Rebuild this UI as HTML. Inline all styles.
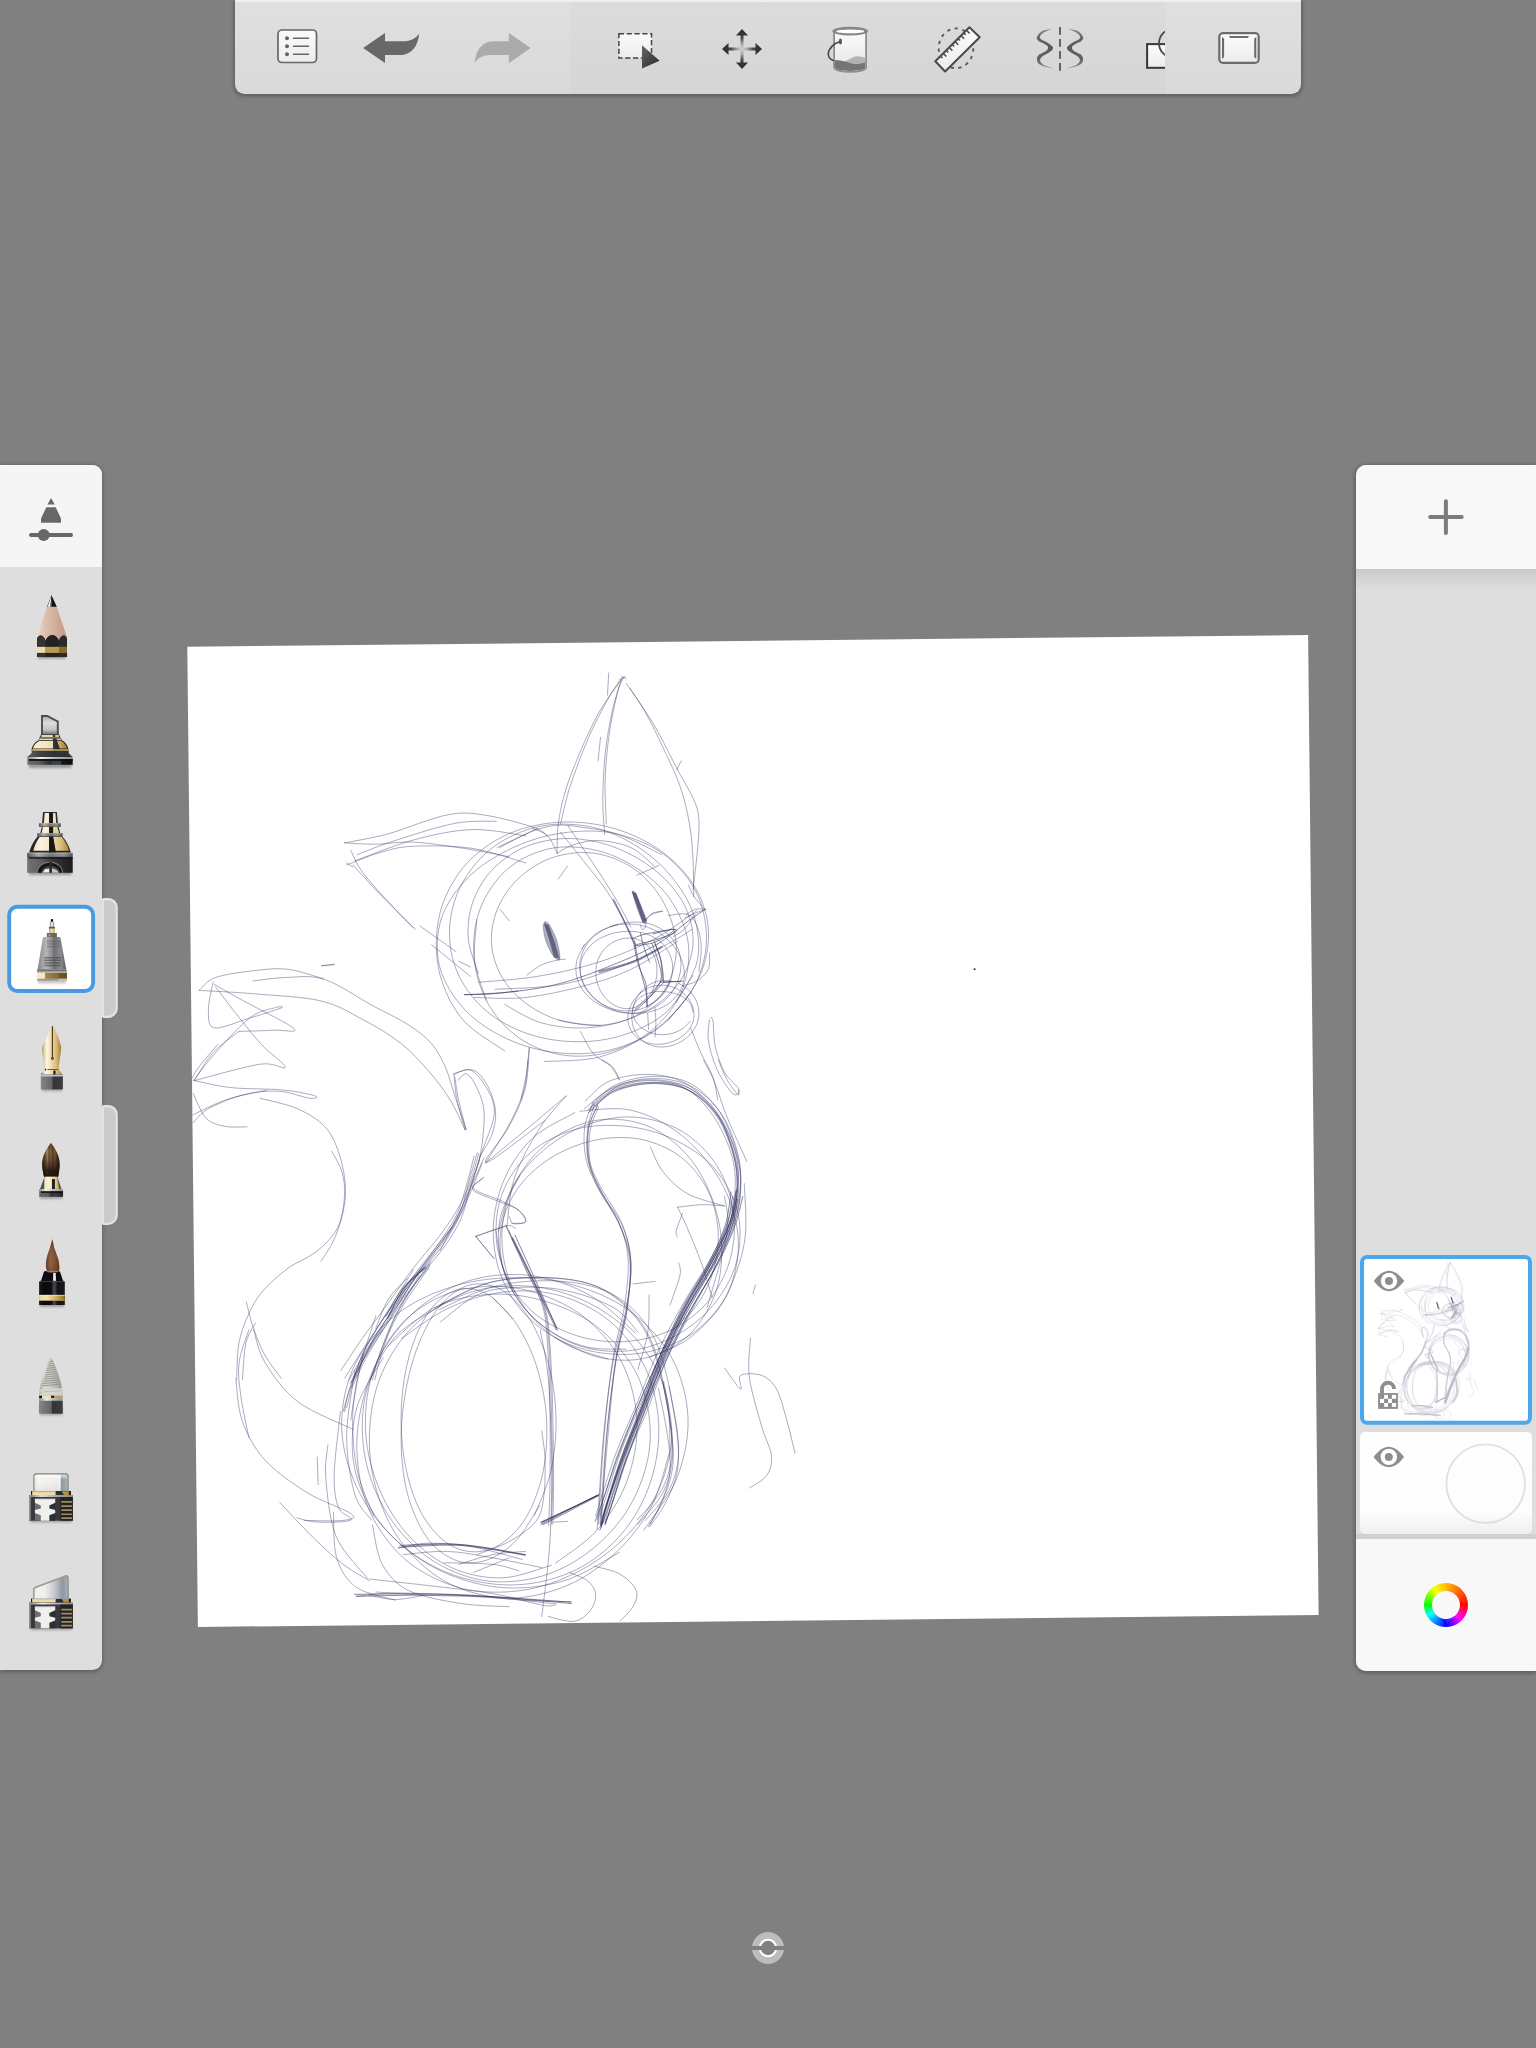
<!DOCTYPE html>
<html><head><meta charset="utf-8">
<style>
html,body{margin:0;padding:0;background:#808080;font-family:"Liberation Sans",sans-serif;}
body{width:1536px;height:2048px;overflow:hidden;position:relative;}
svg{position:absolute;left:0;top:0;display:block;}
.skl{stroke-width:var(--lw,.62px)}.skd{stroke-width:var(--dw,.8px)}
</style></head><body>
<svg width="1536" height="2048" viewBox="0 0 1536 2048">
<defs>
<linearGradient id="tbg" x1="0" y1="0" x2="0" y2="1"><stop offset="0" stop-color="#e0e0e0"/><stop offset="1" stop-color="#d9d9d9"/></linearGradient>
<linearGradient id="tbm" x1="0" y1="0" x2="0" y2="1"><stop offset="0" stop-color="#dcdcdc"/><stop offset="1" stop-color="#d5d5d5"/></linearGradient>
<filter id="sh2" x="-10%" y="-10%" width="120%" height="120%"><feGaussianBlur stdDeviation="2.200"/></filter><filter id="sh" x="-10%" y="-10%" width="120%" height="120%"><feGaussianBlur stdDeviation="1.5"/></filter>
</defs>
<rect width="1536" height="2048" fill="#808080"/>
<!--CANVAS-->
<polygon points="187.3,646.8 1308.1,635 1318.6,1614.9 197.9,1627" fill="#ffffff"/>
<!--SKETCH-->
<clipPath id="ccan"><polygon points="187.3,646.8 1308.1,635 1318.6,1614.9 197.9,1627"/></clipPath>
<g clip-path="url(#ccan)">
<g id="sk" fill="none" stroke-linecap="round" stroke-linejoin="round">
<path class="skl" stroke="#38386a" stroke-opacity=".68" d="M557.1 853.4C557.3 848.5 556.9 834.4 558.3 824.1C559.6 813.7 561.8 803.0 565.3 791.2C568.8 779.5 573.9 766.6 579.4 753.7C584.8 740.9 591.9 725.2 598.1 713.9C604.4 702.6 612.8 691.8 616.9 685.8C621.0 679.7 621.8 678.9 622.7 677.6M560.6 824.1C562.2 817.8 565.3 801.0 570.0 786.6C574.7 772.1 582.5 751.8 588.7 737.3C595.0 722.9 602.4 709.2 607.5 699.8C612.6 690.5 617.3 684.2 619.2 681.1M604.7 834.6C604.4 828.9 602.7 814.1 602.8 800.6C602.9 787.1 603.6 768.6 605.2 753.7C606.7 738.9 609.5 724.1 612.2 711.6C614.9 699.1 620.0 684.2 621.6 678.7M606.3 824.1C606.1 816.2 604.6 792.8 605.2 777.2C605.7 761.6 607.7 744.8 609.8 730.3C612.0 715.9 615.7 699.3 618.0 690.5C620.4 681.7 622.9 679.7 623.9 677.6M626.2 683.4C629.4 688.1 638.7 700.6 645.0 711.6C651.2 722.5 657.9 736.6 663.7 749.1C669.6 761.6 675.9 774.1 680.2 786.6C684.5 799.1 687.4 812.0 689.5 824.1C691.7 836.2 692.3 847.1 693.0 859.2C693.7 871.3 693.6 890.5 693.7 896.7M629.8 688.1C633.9 694.4 646.4 712.0 654.4 725.6C662.4 739.3 671.2 757.7 677.8 770.2C684.5 782.7 690.7 792.4 694.2 800.6C697.7 808.8 698.3 811.6 698.9 819.4C699.5 827.2 698.7 835.8 697.7 847.5C696.8 859.2 693.8 882.7 693.0 889.7M608.7 672.9L607.5 695.2M600.5 737.3L598.1 760.8M681.3 760.8L676.6 770.2M621.6 676.4L626.2 678.7M619.2 679.9L625.1 676.4M499.7 847.5C505.2 844.8 522.7 834.8 532.5 831.1C542.3 827.4 549.7 825.8 558.3 825.2C566.9 824.6 573.9 826.0 584.1 827.6C594.2 829.1 606.3 830.1 619.2 834.6C632.1 839.1 654.4 851.2 661.4 854.5M560.6 832.3C564.5 837.1 576.2 851.6 584.1 861.6C591.9 871.5 600.5 881.5 607.5 892.0C614.5 902.6 621.6 915.5 626.2 924.8C630.9 934.2 634.1 944.4 635.6 948.3M567.7 825.2C571.2 830.5 580.9 845.0 588.7 856.9C596.6 868.8 607.5 885.0 614.5 896.7C621.6 908.4 628.2 922.1 630.9 927.2M557.1 853.4C559.6 852.0 565.5 847.3 572.3 845.2C579.2 843.0 588.4 840.1 598.1 840.5C607.9 840.9 621.6 843.2 630.9 847.5C640.3 851.8 650.5 863.1 654.4 866.2M532.5 828.7C535.0 829.9 543.6 831.7 547.7 835.8C551.8 839.9 555.5 850.4 557.1 853.4M497.3 847.5L537.2 828.7M478.6 982.3C488.4 981.3 517.3 979.7 537.2 976.4C557.1 973.1 578.6 968.6 598.1 962.3C617.7 956.1 638.0 947.5 654.4 938.9C670.8 930.3 689.5 915.5 696.6 910.8M495.0 989.3C505.9 988.5 539.9 988.3 560.6 984.6C581.3 980.9 601.2 973.9 619.2 967.0C637.2 960.2 656.3 949.8 668.4 943.6C680.5 937.3 688.0 931.9 691.9 929.5M473.9 997.5C482.5 997.5 507.1 999.5 525.5 997.5C543.8 995.5 566.5 990.5 584.1 985.8C601.6 981.1 615.3 976.8 630.9 969.4C646.6 962.0 670.0 945.9 677.8 941.2M526.6 975.2C529.2 973.5 536.6 967.2 541.9 964.7C547.1 962.1 554.4 960.9 558.3 960.0C562.2 959.1 564.1 959.4 565.3 959.3M645.0 920.2C646.2 919.2 649.1 915.8 652.0 914.3C655.0 912.8 660.8 911.8 662.6 911.2M567.7 865.8L558.3 879.1M500.4 909.6L509.1 920.6M659.1 865.5L636.8 875.2M420.0 926.0L456.3 951.8M458.7 961.2L470.4 967.0M431.7 944.8L470.4 976.4M529.0 1047.9C528.6 1052.0 528.0 1063.8 526.6 1072.5C525.3 1081.2 521.8 1095.3 520.8 1099.9M580.5 1031.5C582.7 1035.2 588.6 1048.1 593.4 1053.7C598.3 1059.4 605.5 1061.2 609.8 1065.5C614.1 1069.8 617.7 1077.2 619.2 1079.5M690.7 1028.0C692.5 1032.3 697.5 1045.5 701.2 1053.7C705.0 1061.9 710.2 1069.5 713.0 1077.2C715.7 1084.9 716.9 1096.1 717.7 1099.9M709.5 1019.8C709.3 1023.1 707.3 1032.1 708.3 1039.7C709.3 1047.3 712.2 1057.7 715.3 1065.5C718.4 1073.3 723.7 1081.7 727.0 1086.6C730.3 1091.4 733.3 1094.4 735.2 1094.8C737.2 1095.2 740.5 1092.6 738.7 1088.9C737.0 1085.2 728.6 1079.5 724.7 1072.5C720.8 1065.5 717.3 1055.3 715.3 1046.7C713.4 1038.1 713.7 1025.7 713.0 1020.9C712.2 1016.2 711.0 1018.6 710.6 1018.1M688.4 885.0C689.3 887.0 691.5 892.6 694.2 896.7C697.0 900.8 703.0 907.5 704.8 909.6M684.8 917.8C686.6 917.0 692.1 914.5 695.4 913.1C698.7 911.8 703.2 910.2 704.8 909.6M668.4 915.5C671.6 915.3 682.5 912.7 687.2 914.3C691.9 915.9 694.2 919.6 696.6 924.8C698.9 930.1 700.9 938.1 701.2 945.9C701.6 953.7 699.3 967.4 698.9 971.7M709.5 953.0C709.3 955.7 710.4 964.7 708.3 969.4C706.1 974.1 700.9 978.4 696.6 981.1C692.3 983.8 684.8 985.0 682.5 985.8M504.7 1050.9C497.9 1046.0 474.6 1032.7 464.2 1021.2C453.7 1009.6 446.6 995.1 442.0 981.4C437.3 967.8 435.9 953.2 436.4 939.3C436.9 925.4 439.5 911.0 445.1 897.8C450.7 884.6 458.9 871.0 469.9 860.1C480.9 849.3 495.6 839.2 511.0 832.8C526.4 826.5 545.0 822.7 562.3 822.0C579.6 821.3 598.2 823.9 614.5 828.6C630.8 833.4 647.0 841.1 660.2 850.4C673.3 859.7 685.4 871.8 693.4 884.5C701.4 897.2 706.7 912.4 708.2 926.6C709.7 940.7 707.1 956.1 702.3 969.5C697.5 983.0 689.0 996.0 679.2 1007.3C669.5 1018.6 657.3 1029.1 643.7 1037.4C630.1 1045.8 614.2 1053.4 597.7 1057.4C581.1 1061.4 553.2 1060.8 544.4 1061.5M691.4 992.0C685.9 998.1 671.7 1018.7 658.4 1028.3C645.0 1038.0 627.8 1045.7 611.2 1049.7C594.5 1053.8 575.5 1054.6 558.3 1052.8C541.0 1051.1 523.2 1046.3 507.6 1039.1C492.1 1032.0 476.4 1022.0 465.1 1010.0C453.8 998.0 443.8 982.4 439.8 967.2C435.8 952.0 436.6 933.9 441.2 919.0C445.9 904.1 456.6 889.4 467.8 877.8C479.1 866.3 494.0 857.0 508.9 849.6C523.8 842.3 540.4 836.5 557.3 833.8C574.3 831.0 593.4 829.7 610.7 832.8C627.9 835.9 646.8 842.7 660.9 852.2C675.0 861.8 687.5 876.0 695.1 890.1C702.7 904.1 706.2 921.1 706.5 936.5C706.7 951.9 702.9 968.2 696.4 982.3C689.9 996.4 672.2 1014.6 667.4 1021.1M693.1 975.4C688.3 981.8 676.5 1003.8 664.3 1013.9C652.0 1024.1 635.2 1031.6 619.5 1036.2C603.8 1040.8 586.2 1042.3 570.0 1041.5C553.8 1040.8 537.0 1037.5 522.2 1031.7C507.5 1026.0 492.6 1017.3 481.6 1006.8C470.5 996.3 461.2 982.5 455.9 968.8C450.6 955.2 448.6 939.3 449.8 924.7C451.0 910.1 455.7 894.6 463.2 881.5C470.7 868.3 482.0 855.1 495.0 845.8C508.0 836.6 525.3 829.1 541.5 826.0C557.7 822.9 576.5 823.8 592.4 827.2C608.2 830.6 623.7 838.0 636.8 846.2C649.9 854.3 661.6 864.7 671.1 876.2C680.5 887.7 689.3 901.0 693.7 915.0C698.1 929.0 700.3 945.7 697.4 960.3C694.5 974.9 679.8 995.6 676.2 1002.6M478.1 972.9C476.5 967.3 469.3 950.5 468.3 939.0C467.4 927.5 468.6 915.1 472.2 903.9C475.9 892.7 482.1 881.0 490.4 871.8C498.7 862.5 510.1 853.9 522.0 848.3C533.9 842.8 548.4 839.6 561.6 838.7C574.9 837.8 588.9 839.9 601.4 843.0C613.9 846.2 625.7 851.5 636.5 857.6C647.2 863.8 657.3 871.2 665.7 879.8C674.0 888.5 682.0 898.7 686.5 909.6C691.1 920.5 693.9 933.4 692.9 945.2C692.0 956.9 687.5 969.7 680.9 980.1C674.3 990.4 663.9 999.9 653.3 1007.0C642.6 1014.2 629.7 1019.4 617.2 1022.9C604.6 1026.4 591.0 1028.2 578.0 1028.0C565.0 1027.9 551.3 1026.0 539.0 1022.1C526.8 1018.2 510.5 1007.5 504.8 1004.5M486.2 1000.1C484.2 992.7 474.8 970.6 473.8 955.3C472.8 940.1 474.7 922.9 480.3 908.5C485.9 894.1 495.8 879.1 507.4 869.1C519.0 859.1 535.3 851.7 550.0 848.6C564.7 845.4 581.3 847.0 595.7 850.2C610.1 853.4 624.1 859.8 636.4 867.9C648.7 875.9 661.1 886.2 669.7 898.6C678.3 911.0 686.0 927.0 688.1 942.2C690.1 957.5 687.8 975.9 682.1 990.3C676.4 1004.6 665.2 1018.5 653.8 1028.6C642.3 1038.7 627.5 1046.1 613.3 1050.7C599.1 1055.2 583.0 1057.2 568.3 1055.7C553.6 1054.3 537.7 1049.5 525.0 1041.8C512.3 1034.2 500.2 1022.4 491.9 1009.9C483.6 997.4 477.7 981.7 475.2 966.7C472.6 951.6 476.5 927.5 476.8 919.6M600.3 1025.4C593.9 1024.7 573.8 1024.4 561.7 1021.0C549.7 1017.6 537.9 1012.0 528.1 1004.9C518.3 997.9 508.9 988.7 502.8 978.6C496.7 968.6 492.5 956.2 491.6 944.6C490.7 933.0 492.9 920.1 497.4 909.1C501.9 898.1 509.4 887.1 518.4 878.6C527.3 870.1 539.1 862.4 551.1 858.1C563.1 853.8 577.7 851.7 590.5 852.8C603.3 853.9 616.9 858.7 627.6 864.8C638.4 870.8 647.7 880.1 655.0 889.3C662.2 898.6 667.8 909.3 671.3 920.3C674.8 931.3 677.1 943.6 676.0 955.2C674.8 966.9 671.1 980.1 664.3 990.3C657.5 1000.4 646.5 1010.2 635.1 1016.1C623.8 1022.0 609.3 1024.9 596.5 1025.6C583.7 1026.2 564.6 1020.8 558.3 1019.9M581.9 948.5C584.1 946.2 589.7 938.2 595.1 934.4C600.6 930.5 607.5 927.2 614.3 925.5C621.2 923.9 629.3 923.5 636.3 924.4C643.3 925.3 650.5 928.0 656.3 931.1C662.1 934.3 667.1 938.7 671.2 943.2C675.3 947.7 678.7 952.8 680.9 958.2C683.1 963.5 684.7 969.6 684.4 975.4C684.1 981.2 682.4 987.8 679.0 993.0C675.5 998.2 669.9 1003.3 663.9 1006.6C658.0 1009.9 650.2 1012.0 643.2 1013.0C636.2 1014.0 628.6 1013.5 621.8 1012.3C614.9 1011.2 608.1 1009.0 602.2 1006.1C596.3 1003.1 590.6 999.2 586.4 994.6C582.2 990.1 578.8 984.4 577.2 978.8C575.6 973.2 575.5 966.9 576.7 961.2C577.9 955.5 583.2 947.4 584.5 944.6M669.9 982.4C668.2 985.0 664.0 993.5 659.6 997.8C655.3 1002.0 649.5 1005.8 643.6 1008.0C637.7 1010.2 630.6 1011.3 624.3 1010.9C618.0 1010.6 611.2 1008.7 605.6 1005.9C599.9 1003.2 594.4 999.2 590.4 994.6C586.3 990.0 582.7 984.1 581.2 978.2C579.7 972.4 579.7 965.3 581.6 959.6C583.4 953.8 587.7 948.0 592.2 943.8C596.8 939.6 603.1 936.6 609.0 934.5C614.9 932.5 621.4 931.4 627.7 931.3C634.0 931.3 640.9 931.9 646.9 934.1C652.8 936.3 659.2 940.0 663.4 944.6C667.6 949.2 670.9 955.6 672.1 961.5C673.3 967.4 672.6 974.2 670.8 979.9C669.0 985.6 665.6 991.3 661.5 995.8C657.4 1000.3 648.7 1005.1 646.2 1007.0M644.9 1001.2C643.2 1002.2 638.6 1006.0 635.2 1007.3C631.8 1008.5 628.0 1008.9 624.4 1008.5C620.9 1008.2 617.2 1006.9 614.0 1005.0C610.8 1003.2 607.6 1000.6 605.0 997.5C602.4 994.4 600.0 990.6 598.5 986.6C596.9 982.5 595.8 977.6 595.8 973.1C595.7 968.6 596.6 963.6 598.1 959.5C599.6 955.4 602.1 951.6 604.8 948.6C607.4 945.6 610.7 943.4 614.0 941.7C617.2 940.0 620.7 938.9 624.1 938.4C627.6 937.9 631.3 937.8 634.8 938.6C638.3 939.5 642.1 941.0 645.1 943.5C648.2 945.9 651.1 949.5 653.1 953.3C655.0 957.1 656.3 961.9 656.8 966.4C657.3 970.8 656.9 975.7 656.0 980.0C655.2 984.3 652.3 990.2 651.6 992.2M678.9 983.4C680.6 984.6 686.4 987.7 689.3 990.7C692.3 993.6 694.8 997.3 696.4 1001.1C698.0 1004.8 698.9 1009.2 698.9 1013.2C698.9 1017.2 698.0 1021.5 696.4 1025.2C694.8 1028.9 692.2 1032.3 689.4 1035.2C686.6 1038.1 683.2 1040.6 679.6 1042.5C675.9 1044.3 671.8 1045.9 667.7 1046.5C663.6 1047.2 658.9 1047.3 654.7 1046.3C650.5 1045.4 646.1 1043.4 642.7 1040.8C639.4 1038.1 636.5 1034.3 634.7 1030.6C632.9 1026.9 632.1 1022.5 631.8 1018.5C631.6 1014.5 632.2 1010.4 633.3 1006.6C634.3 1002.8 635.9 999.0 638.1 995.7C640.3 992.3 643.1 989.0 646.4 986.6C649.7 984.2 653.9 982.1 658.0 981.1C662.1 980.2 668.8 980.9 671.0 980.8M639.9 993.2C641.7 992.1 646.7 988.2 650.7 986.9C654.8 985.5 659.6 984.9 663.9 985.2C668.3 985.5 672.9 986.9 676.7 988.7C680.5 990.6 684.1 993.4 686.7 996.4C689.4 999.4 691.6 1003.1 692.7 1006.8C693.9 1010.4 694.3 1014.6 693.8 1018.3C693.2 1022.0 691.6 1025.9 689.4 1029.1C687.2 1032.3 684.0 1035.2 680.7 1037.4C677.4 1039.7 673.4 1041.5 669.4 1042.6C665.3 1043.8 660.8 1044.5 656.5 1044.3C652.2 1044.1 647.3 1043.2 643.4 1041.5C639.5 1039.7 635.7 1036.8 633.1 1033.6C630.6 1030.5 628.9 1026.3 628.2 1022.5C627.5 1018.8 627.9 1014.7 628.8 1011.1C629.7 1007.4 631.3 1003.9 633.4 1000.7C635.5 997.5 640.0 993.5 641.3 992.0M690.0 1021.4C689.0 1022.5 686.1 1026.1 683.6 1028.0C681.1 1029.8 678.1 1031.4 675.0 1032.5C671.8 1033.6 668.3 1034.4 664.8 1034.6C661.4 1034.8 657.7 1034.6 654.4 1033.8C651.1 1033.1 647.8 1031.8 645.0 1030.2C642.2 1028.6 639.8 1026.5 637.9 1024.3C635.9 1022.1 634.4 1019.5 633.6 1016.9C632.7 1014.3 632.4 1011.3 632.9 1008.6C633.4 1006.0 634.7 1003.1 636.6 1000.8C638.5 998.5 641.4 996.3 644.3 994.9C647.3 993.4 650.9 992.4 654.3 991.9C657.7 991.3 661.2 991.3 664.6 991.6C668.0 991.8 671.4 992.4 674.5 993.3C677.7 994.3 681.0 995.6 683.6 997.3C686.3 999.0 688.8 1001.3 690.4 1003.8C692.0 1006.2 692.6 1010.6 693.0 1011.9M611.0 926.4C614.0 925.7 623.0 922.6 629.3 922.2C635.5 921.7 642.3 921.9 648.5 923.6C654.6 925.3 661.2 928.3 666.1 932.4C671.0 936.5 675.4 942.3 677.8 948.1C680.3 953.9 681.2 960.9 680.9 967.1C680.6 973.3 678.6 979.8 675.9 985.3C673.2 990.9 669.3 996.3 664.6 1000.4C660.0 1004.6 654.2 1008.2 648.2 1010.4C642.3 1012.5 635.4 1013.4 629.1 1013.1C622.7 1012.9 616.1 1011.2 610.3 1008.7C604.5 1006.2 598.8 1002.5 594.3 998.1C589.8 993.8 585.5 988.2 583.1 982.4C580.7 976.6 579.3 969.6 579.8 963.3C580.4 957.1 582.9 950.3 586.3 945.0C589.7 939.8 595.0 935.2 600.3 931.7C605.5 928.2 614.7 925.5 617.6 924.2M598.5 971.7C604.6 969.8 624.3 965.0 634.9 960.7C645.6 956.5 657.7 948.6 662.3 946.1M599.3 970.7C605.3 969.0 624.8 964.5 635.3 960.5C645.8 956.6 657.8 949.1 662.3 946.8M599.0 972.9C604.9 971.0 624.1 965.8 634.5 961.5C644.8 957.3 656.6 949.5 661.0 947.1M599.2 972.2C605.2 970.5 624.6 966.0 635.1 961.9C645.7 957.8 657.8 950.0 662.3 947.7M613.1 900.2C615.2 904.5 622.2 918.1 625.8 925.7C629.5 933.3 633.4 942.4 634.9 945.8M613.3 898.8C615.5 903.1 622.5 916.9 626.3 924.5C630.1 932.1 634.5 941.2 636.1 944.6M614.2 900.2C616.1 904.2 622.3 917.4 625.6 924.6C628.9 931.7 632.6 940.1 634.0 943.2M640.4 924.8C640.7 925.6 641.5 928.9 642.2 929.4C643.0 929.8 644.2 929.4 645.0 927.5C645.7 925.7 646.5 920.0 646.8 918.4M646.8 918.4C647.9 917.5 650.6 914.2 653.2 913.0C655.8 911.7 660.8 911.4 662.3 911.1M655.0 1007.8C655.1 1010.5 655.9 1019.3 655.9 1024.2C655.9 1029.0 655.1 1034.8 655.0 1036.9M647.7 1013.2L648.6 1029.6M686.0 914.8C687.5 913.9 691.8 910.2 695.1 909.3C698.4 908.4 704.2 909.3 706.0 909.3M673.2 936.7C675.0 935.4 680.5 933.0 684.2 929.4C687.8 925.7 693.3 917.2 695.1 914.8M344.6 842.9C351.9 841.4 371.3 838.4 388.3 833.8C405.3 829.1 430.7 818.1 446.7 815.0C462.6 811.9 469.6 812.9 484.2 815.0C498.8 817.1 523.8 824.0 534.2 827.5C544.6 831.0 544.6 834.4 546.7 835.8M355.0 860.8C364.7 857.4 393.9 845.2 413.3 840.0C432.8 834.8 452.9 830.3 471.7 829.6C490.4 828.9 516.8 834.8 525.8 835.8M346.7 865.0C352.2 862.9 368.9 855.6 380.0 852.5C391.1 849.4 398.1 846.9 413.3 846.2C428.6 845.6 452.9 845.6 471.7 848.3C490.4 851.1 516.8 860.5 525.8 862.9M357.1 854.6C363.7 852.2 380.3 845.2 396.7 840.0C413.0 834.8 438.3 826.5 455.0 823.3C471.7 820.2 489.7 821.6 496.7 821.2M352.9 865.0C357.4 869.9 369.6 883.4 380.0 894.2C390.4 904.9 409.5 923.7 415.4 929.6M350.8 850.4C352.9 854.2 355.7 863.3 363.3 873.3C371.0 883.4 388.3 901.8 396.7 910.8C405.0 919.9 410.6 924.7 413.3 927.5M346.7 862.9L352.9 867.1M344.6 842.9C349.8 843.1 364.4 844.3 375.8 844.2C387.3 844.0 398.8 841.4 413.3 842.1C427.9 842.8 447.4 845.9 463.3 848.3C479.3 850.8 501.5 855.3 509.2 856.7M321.7 965.8L334.2 964.2M199.1 990.4C201.8 988.2 206.1 980.8 215.5 977.5C224.8 974.2 243.2 971.8 255.3 970.5C267.4 969.1 276.8 967.9 288.1 969.3C299.5 970.7 317.4 977.1 323.3 978.7M253.0 981.0C258.4 980.4 273.9 977.8 285.8 977.5C297.7 977.2 310.0 974.7 324.5 979.4C338.9 984.1 358.6 998.1 372.5 1005.6C386.4 1013.1 397.9 1018.1 407.7 1024.4C417.4 1030.6 424.8 1036.1 431.1 1043.1C437.3 1050.2 441.2 1058.0 445.2 1066.6C449.1 1075.2 451.0 1084.1 454.5 1094.7C458.0 1105.2 464.3 1124.0 466.2 1129.8M199.1 990.4C208.4 991.0 235.0 992.1 255.3 993.9C275.6 995.7 303.0 996.6 320.9 1000.9C338.9 1005.2 349.8 1012.7 363.1 1019.7C376.4 1026.7 389.7 1034.5 400.6 1043.1C411.6 1051.7 420.5 1061.9 428.7 1071.2C437.0 1080.6 443.8 1089.6 449.8 1099.4C455.9 1109.1 462.5 1124.8 465.1 1129.8M213.1 982.2C212.3 986.9 208.2 1002.7 208.4 1010.3C208.6 1017.9 207.7 1026.5 214.3 1027.9C220.9 1029.3 237.1 1021.8 248.3 1018.5C259.4 1015.2 276.8 1009.7 281.1 1008.0C285.4 1006.2 279.1 1006.4 274.1 1008.0C269.0 1009.5 260.0 1010.3 250.6 1017.3C241.2 1024.4 227.4 1039.6 217.8 1050.2C208.2 1060.7 197.3 1075.5 193.2 1080.6M214.3 984.5C219.2 987.3 230.3 993.6 243.6 1000.9C256.9 1008.3 288.9 1023.7 294.0 1028.6C299.1 1033.5 283.2 1029.8 274.1 1030.2C264.9 1030.7 244.8 1031.2 238.9 1031.4M215.5 986.9C219.4 992.0 231.1 1007.6 238.9 1017.3C246.7 1027.1 254.6 1037.1 262.3 1045.5C270.1 1053.8 285.7 1064.1 285.3 1067.3C284.9 1070.4 275.2 1062.0 260.0 1064.2C244.8 1066.4 205.3 1077.9 194.4 1080.6M194.4 1080.6C200.6 1081.8 217.0 1086.1 231.9 1087.7C246.7 1089.2 269.6 1088.6 283.4 1090.0C297.3 1091.4 310.8 1094.5 315.1 1095.9C319.4 1097.2 315.3 1099.0 309.2 1098.2C303.2 1097.4 289.7 1091.8 278.7 1091.2C267.8 1090.6 255.3 1091.8 243.6 1094.7C231.9 1097.6 216.8 1104.1 208.4 1108.7C200.0 1113.4 195.7 1120.5 193.2 1122.8M193.2 1093.5C195.4 1097.6 200.8 1112.7 206.1 1118.1C211.4 1123.6 218.0 1124.9 224.8 1126.3C231.7 1127.8 243.4 1126.7 247.1 1126.8M193.2 1114.6C198.9 1112.1 214.9 1103.5 227.2 1099.4C239.5 1095.3 260.4 1091.6 267.0 1090.0M260.0 1098.2C266.2 1100.0 286.6 1103.9 297.5 1108.7C308.4 1113.6 318.6 1119.7 325.6 1127.5C332.7 1135.3 336.4 1145.5 339.7 1155.6C343.0 1165.8 345.2 1178.3 345.5 1188.4C345.9 1198.6 344.2 1207.6 342.0 1216.6C339.9 1225.5 336.2 1234.9 332.7 1242.3C329.1 1249.8 322.9 1258.0 320.9 1261.1M331.5 1150.9C333.2 1154.5 339.9 1164.2 342.0 1172.0C344.2 1179.8 345.2 1188.4 344.4 1197.8C343.6 1207.2 342.0 1219.3 337.3 1228.3C332.7 1237.3 324.5 1245.1 316.2 1251.7C308.0 1258.4 297.1 1261.5 288.1 1268.1C279.1 1274.8 269.0 1283.7 262.3 1291.6C255.7 1299.4 252.2 1306.4 248.3 1315.0C244.4 1323.6 240.9 1332.3 238.9 1343.1C237.0 1353.9 237.0 1373.8 236.6 1379.9M246.4 1302.1C247.5 1306.2 249.9 1317.9 253.0 1326.7C256.0 1335.5 260.0 1346.2 264.7 1354.8C269.4 1363.4 278.4 1374.4 281.1 1378.3M255.3 1323.2C253.7 1326.5 248.1 1333.7 245.9 1343.1C243.8 1352.6 243.0 1373.8 242.4 1379.9M321.6 965.8L334.3 964.6M453.4 1073.6C456.7 1073.0 467.6 1068.1 473.3 1070.1C478.9 1072.0 483.6 1078.5 487.3 1085.3C491.1 1092.1 494.8 1102.9 495.5 1111.1C496.3 1119.3 494.6 1127.1 492.0 1134.5C489.5 1142.0 482.3 1152.1 480.3 1155.6M454.1 1074.8C454.5 1078.9 455.0 1090.2 456.9 1099.4C458.7 1108.6 463.7 1124.8 465.1 1129.8M458.0 1080.6C459.4 1079.5 463.3 1072.8 466.2 1073.6C469.2 1074.4 472.7 1079.5 475.6 1085.3C478.6 1091.2 482.7 1099.8 483.8 1108.7C485.0 1117.7 483.4 1130.6 482.7 1139.2C481.9 1147.8 479.7 1156.8 479.1 1160.3M529.5 1047.8C528.7 1054.8 528.4 1076.7 524.8 1090.0C521.3 1103.3 514.9 1115.4 508.4 1127.5C502.0 1139.6 480.1 1163.8 486.2 1162.7C492.3 1161.5 535.2 1127.5 545.0 1120.5M483.8 1177.2C482.1 1178.7 475.1 1183.6 473.7 1186.1C472.4 1188.6 471.0 1189.2 475.6 1192.0C480.2 1194.7 494.4 1199.6 501.4 1202.5C508.4 1205.4 513.7 1206.4 517.8 1209.5C521.9 1212.7 526.8 1218.9 526.0 1221.2C525.2 1223.6 515.9 1224.4 513.1 1223.6C510.4 1222.8 510.2 1217.7 509.6 1216.6M475.6 1236.5C480.7 1234.7 499.5 1227.3 506.1 1225.9C512.7 1224.6 513.9 1227.9 515.5 1228.3M475.6 1236.5L494.4 1258.7M217.8 1044.3C214.7 1048.0 203.4 1060.9 199.1 1066.6C194.8 1072.2 193.2 1076.3 192.0 1078.3M238.9 1031.4C234.6 1034.9 220.5 1044.3 213.1 1052.5C205.7 1060.7 197.5 1075.9 194.4 1080.6M480.3 1155.6C478.7 1160.7 474.3 1176.3 470.9 1186.1C467.6 1195.9 465.1 1204.8 460.4 1214.2C455.7 1223.6 449.6 1232.6 442.8 1242.3C436.0 1252.1 427.2 1262.3 419.4 1272.8C411.6 1283.4 404.5 1293.1 395.9 1305.6C387.3 1318.1 375.6 1335.4 367.8 1347.8C360.0 1360.2 352.2 1374.6 349.1 1379.9M477.2 1152.7C475.7 1157.9 471.2 1173.6 468.2 1183.9C465.3 1194.2 463.9 1204.6 459.5 1214.3C455.0 1223.9 448.3 1232.3 441.5 1242.0C434.7 1251.8 426.1 1262.0 418.6 1272.9C411.1 1283.7 404.8 1294.4 396.5 1307.1C388.2 1319.8 376.5 1336.5 369.0 1349.0C361.5 1361.6 354.4 1376.8 351.4 1382.3M479.5 1160.3C477.8 1165.5 472.6 1181.6 469.4 1191.5C466.2 1201.5 464.7 1210.7 460.5 1220.0C456.3 1229.3 450.7 1237.7 444.0 1247.2C437.3 1256.6 428.1 1266.2 420.4 1276.5C412.7 1286.7 406.3 1296.2 397.7 1308.6C389.1 1321.0 376.8 1338.4 368.8 1350.9C360.9 1363.3 353.3 1377.9 350.2 1383.3M478.8 1153.3C477.3 1158.3 473.3 1174.1 469.6 1183.6C466.0 1193.1 462.2 1201.2 457.0 1210.2C451.8 1219.2 445.6 1227.7 438.4 1237.4C431.1 1247.0 421.3 1257.6 413.4 1268.0C405.5 1278.3 399.5 1287.5 390.9 1299.4C382.2 1311.4 369.9 1327.7 361.5 1339.5C353.2 1351.4 344.3 1365.5 340.8 1370.7M482.2 1163.1C480.2 1168.0 474.6 1183.1 470.5 1192.5C466.5 1201.8 463.0 1210.2 458.1 1219.3C453.3 1228.4 448.3 1237.7 441.5 1247.1C434.7 1256.4 425.6 1265.4 417.4 1275.3C409.2 1285.1 401.3 1294.0 392.4 1306.1C383.5 1318.1 372.0 1335.5 364.0 1347.6C356.1 1359.6 348.0 1373.1 344.8 1378.2M474.0 1156.2C472.7 1161.3 469.0 1176.7 466.1 1186.5C463.2 1196.4 460.9 1205.9 456.4 1215.4C451.8 1224.9 445.3 1233.6 438.7 1243.5C432.0 1253.4 423.6 1263.8 416.4 1275.0C409.1 1286.1 403.2 1297.2 395.1 1310.4C387.1 1323.7 375.3 1341.5 368.1 1354.3C360.9 1367.2 354.6 1382.2 351.9 1387.8M588.4 1109.5C592.6 1106.2 602.9 1094.2 613.2 1089.7C623.5 1085.2 637.9 1082.3 650.3 1082.3C662.7 1082.3 676.3 1083.9 687.4 1089.7C698.5 1095.5 709.3 1105.4 717.1 1116.9C724.9 1128.4 731.1 1145.8 734.4 1159.0C737.7 1172.2 737.7 1184.5 736.9 1196.1C736.1 1207.6 733.6 1216.7 729.5 1228.2C725.3 1239.8 719.2 1252.1 712.1 1265.3C705.1 1278.5 695.6 1292.1 687.4 1307.4C679.2 1322.7 670.1 1340.4 662.7 1356.9C655.2 1373.4 649.5 1389.9 642.9 1406.4C636.3 1422.9 628.9 1440.2 623.1 1455.8C617.3 1471.5 611.9 1489.0 608.2 1500.4C604.5 1511.8 602.0 1520.2 600.8 1524.1M588.9 1109.8C593.2 1106.6 604.3 1094.9 614.7 1090.4C625.0 1085.8 638.8 1082.8 651.0 1082.4C663.3 1082.0 677.3 1082.3 688.4 1087.9C699.5 1093.5 709.9 1104.4 717.7 1116.0C725.4 1127.7 731.8 1145.1 734.9 1157.9C738.0 1170.8 737.4 1182.2 736.4 1193.3C735.4 1204.4 733.2 1213.2 729.1 1224.8C725.0 1236.4 718.9 1249.8 711.7 1263.0C704.4 1276.2 694.0 1288.8 685.6 1303.9C677.3 1319.0 669.1 1337.2 661.5 1353.5C653.8 1369.7 646.9 1384.9 639.8 1401.2C632.7 1417.6 624.7 1436.1 618.8 1451.6C613.0 1467.2 608.4 1483.2 604.9 1494.5C601.4 1505.8 599.0 1515.2 597.8 1519.3M588.3 1112.7C592.6 1109.2 603.4 1096.7 614.2 1091.9C624.9 1087.0 639.9 1083.6 652.6 1083.4C665.2 1083.3 679.2 1085.6 690.2 1091.1C701.2 1096.6 711.0 1105.6 718.5 1116.7C726.0 1127.8 732.0 1144.8 735.3 1157.7C738.7 1170.6 739.1 1182.8 738.4 1194.1C737.6 1205.3 734.8 1213.9 730.8 1225.3C726.9 1236.6 721.6 1249.0 714.8 1262.2C707.9 1275.4 697.7 1289.3 689.5 1304.5C681.3 1319.7 672.9 1337.1 665.7 1353.5C658.5 1369.8 653.0 1386.2 646.4 1402.6C639.8 1419.0 632.1 1436.2 625.9 1451.8C619.8 1467.3 613.5 1484.6 609.5 1495.6C605.4 1506.6 603.0 1514.0 601.7 1517.7M591.9 1103.5C596.0 1100.3 606.2 1088.9 616.6 1084.4C627.0 1079.9 641.9 1076.4 654.3 1076.3C666.8 1076.2 680.2 1077.9 691.2 1083.9C702.1 1090.0 712.3 1100.9 720.0 1112.7C727.7 1124.6 734.0 1141.7 737.4 1155.2C740.9 1168.7 741.4 1181.8 740.6 1193.6C739.8 1205.3 736.9 1214.2 732.7 1225.7C728.5 1237.3 722.2 1249.6 715.3 1262.8C708.3 1275.9 699.1 1289.5 690.9 1304.8C682.7 1320.1 673.3 1337.8 666.0 1354.5C658.7 1371.1 653.5 1387.9 647.1 1404.8C640.7 1421.6 633.5 1439.6 627.6 1455.4C621.6 1471.2 615.1 1488.3 611.3 1499.7C607.5 1511.2 605.9 1520.1 604.9 1524.2M584.6 1108.6C588.9 1105.4 599.5 1094.2 610.0 1089.5C620.6 1084.8 635.5 1080.8 648.0 1080.5C660.5 1080.3 674.2 1082.3 685.1 1088.2C696.0 1094.0 705.4 1104.5 713.2 1115.8C721.0 1127.1 728.3 1143.3 731.9 1156.0C735.5 1168.8 735.8 1180.8 734.9 1192.4C734.0 1204.0 730.8 1214.1 726.5 1225.4C722.3 1236.8 716.7 1247.7 709.6 1260.6C702.5 1273.4 692.5 1287.3 684.0 1302.2C675.5 1317.2 666.1 1334.1 658.5 1350.4C650.9 1366.8 645.1 1383.8 638.3 1400.3C631.4 1416.8 623.3 1434.0 617.5 1449.3C611.6 1464.5 606.8 1480.7 603.1 1491.9C599.5 1503.0 596.9 1511.9 595.7 1515.9M585.1 1101.2C589.2 1097.9 598.9 1085.6 609.3 1081.2C619.8 1076.7 635.3 1074.1 647.8 1074.4C660.3 1074.7 672.9 1076.5 684.3 1082.7C695.6 1088.9 707.9 1099.9 716.0 1111.6C724.1 1123.3 729.4 1139.8 733.0 1153.0C736.5 1166.2 737.7 1179.4 737.3 1191.0C736.9 1202.6 734.7 1210.9 730.6 1222.6C726.4 1234.3 719.3 1247.9 712.3 1261.2C705.3 1274.5 696.1 1287.2 688.3 1302.6C680.6 1318.0 672.6 1336.8 665.7 1353.4C658.7 1370.0 653.1 1385.9 646.9 1402.3C640.6 1418.7 633.5 1435.8 628.0 1451.7C622.6 1467.5 617.7 1485.6 614.0 1497.3C610.4 1509.1 607.4 1518.0 606.0 1522.1M595.7 1105.8C599.7 1102.4 609.4 1090.0 619.4 1085.4C629.4 1080.9 643.6 1078.1 655.8 1078.4C668.0 1078.7 681.6 1081.2 692.6 1087.2C703.6 1093.2 714.2 1102.9 721.9 1114.4C729.5 1125.9 735.4 1143.1 738.4 1156.1C741.4 1169.2 741.0 1181.2 739.8 1192.8C738.7 1204.5 735.8 1214.5 731.6 1226.0C727.5 1237.6 721.9 1249.0 715.0 1262.3C708.1 1275.6 698.7 1290.3 690.2 1305.9C681.7 1321.4 671.9 1339.3 664.2 1355.8C656.6 1372.3 650.9 1388.4 644.4 1404.7C637.9 1421.0 631.1 1438.0 625.4 1453.7C619.6 1469.3 613.5 1487.3 609.8 1498.7C606.1 1510.1 604.1 1518.0 603.0 1521.9M590.1 1111.4C594.2 1108.0 603.9 1095.6 614.3 1090.9C624.8 1086.3 640.3 1083.6 652.8 1083.6C665.3 1083.5 678.0 1084.6 689.2 1090.5C700.5 1096.5 712.2 1107.8 720.4 1119.5C728.5 1131.2 734.9 1147.8 738.1 1160.8C741.3 1173.8 740.7 1186.1 739.8 1197.5C738.9 1208.9 736.6 1217.6 732.6 1229.1C728.5 1240.5 722.2 1252.6 715.5 1266.1C708.7 1279.5 700.3 1294.5 692.2 1309.8C684.2 1325.2 674.5 1342.0 667.3 1358.2C660.0 1374.5 655.1 1391.0 648.5 1407.3C642.0 1423.5 633.8 1440.1 627.8 1455.7C621.8 1471.3 616.4 1489.4 612.6 1500.8C608.9 1512.2 606.7 1520.2 605.5 1524.1M590.5 1107.2C594.4 1103.8 603.8 1091.5 613.8 1086.9C623.8 1082.3 638.2 1079.6 650.6 1079.7C663.0 1079.8 676.9 1081.6 688.1 1087.3C699.4 1093.1 710.2 1103.0 718.2 1114.3C726.2 1125.6 732.9 1142.0 736.1 1155.1C739.3 1168.2 738.6 1181.3 737.3 1192.9C736.1 1204.4 732.9 1213.3 728.6 1224.4C724.4 1235.4 718.6 1246.2 711.8 1259.2C705.0 1272.1 695.8 1286.6 687.6 1301.9C679.4 1317.3 670.0 1335.0 662.5 1351.1C655.0 1367.2 649.5 1382.5 642.8 1398.6C636.1 1414.7 628.0 1432.1 622.2 1447.8C616.3 1463.4 611.2 1481.3 607.5 1492.6C603.8 1503.9 601.3 1511.8 600.0 1515.7M593.4 1102.1C591.9 1106.2 586.0 1117.3 584.7 1126.8C583.5 1136.3 583.7 1148.7 586.0 1159.0C588.2 1169.3 593.0 1178.3 598.3 1188.6C603.7 1199.0 613.2 1209.3 618.1 1220.8C623.1 1232.4 627.0 1243.5 628.0 1257.9C629.1 1272.4 626.8 1290.9 624.3 1307.4C621.8 1323.9 616.5 1336.3 613.2 1356.9C609.9 1377.5 607.0 1403.2 604.5 1431.1C602.0 1459.0 599.4 1508.6 598.3 1524.1M597.4 1105.4C595.8 1109.4 589.7 1120.2 588.2 1129.5C586.7 1138.9 586.1 1151.2 588.4 1161.7C590.7 1172.1 596.5 1181.5 601.8 1192.2C607.1 1202.9 615.3 1214.2 620.2 1225.9C625.1 1237.7 630.2 1248.6 631.0 1262.9C631.9 1277.2 628.5 1295.4 625.5 1311.8C622.5 1328.3 616.8 1340.9 613.1 1361.5C609.4 1382.2 606.2 1407.8 603.6 1435.8C600.9 1463.8 598.2 1514.1 597.1 1529.8M597.9 1104.9C596.4 1108.9 590.1 1119.0 588.7 1128.6C587.3 1138.2 587.3 1151.8 589.4 1162.3C591.5 1172.8 595.7 1181.2 601.1 1191.6C606.4 1201.9 616.7 1212.9 621.6 1224.3C626.6 1235.7 630.0 1246.0 630.8 1260.2C631.7 1274.3 629.2 1292.7 626.7 1309.3C624.2 1325.9 618.9 1339.0 615.8 1359.8C612.7 1380.6 610.7 1406.7 608.1 1434.3C605.6 1461.9 601.7 1510.1 600.4 1525.3M594.4 1104.8C593.3 1109.1 588.2 1120.8 587.4 1130.6C586.5 1140.5 587.0 1153.6 589.2 1163.8C591.3 1174.0 595.3 1181.9 600.4 1192.0C605.4 1202.1 614.4 1212.7 619.3 1224.5C624.2 1236.3 628.8 1248.2 630.0 1262.8C631.3 1277.5 629.1 1295.9 626.8 1312.3C624.4 1328.8 619.3 1341.1 616.0 1361.5C612.7 1381.8 609.4 1406.9 606.9 1434.6C604.4 1462.3 602.0 1512.1 601.1 1527.6M598.6 1107.1C597.2 1110.9 591.7 1120.9 590.3 1130.0C588.9 1139.2 588.0 1151.8 590.0 1161.9C592.1 1172.0 597.4 1180.6 602.7 1190.7C607.9 1200.9 617.0 1211.3 621.6 1222.6C626.2 1233.9 629.4 1244.2 630.3 1258.5C631.2 1272.8 629.2 1292.0 626.9 1308.6C624.5 1325.1 619.4 1337.5 616.1 1357.8C612.8 1378.0 609.8 1402.3 607.1 1429.9C604.4 1457.5 601.1 1507.7 599.9 1523.3M579.8 1111.2C587.8 1110.9 612.6 1106.8 627.8 1109.6C643.0 1112.3 658.2 1119.5 671.0 1127.7C683.9 1135.8 695.2 1146.8 704.8 1158.5C714.4 1170.2 723.0 1183.6 728.6 1198.0C734.2 1212.5 738.6 1229.2 738.4 1245.1C738.2 1261.0 734.5 1279.1 727.4 1293.4C720.2 1307.8 708.1 1321.7 695.5 1331.3C682.8 1340.9 666.6 1347.4 651.5 1351.1C636.4 1354.8 620.0 1355.2 604.8 1353.4C589.7 1351.6 574.2 1347.3 560.6 1340.5C547.0 1333.7 533.5 1324.0 523.3 1312.5C513.1 1301.0 504.5 1286.2 499.5 1271.4C494.6 1256.7 492.6 1239.7 493.5 1224.0C494.5 1208.3 498.6 1191.7 505.2 1177.3C511.8 1162.9 521.5 1148.4 533.2 1137.6C544.8 1126.9 567.9 1116.8 574.9 1112.6M498.3 1232.0C500.8 1224.2 505.6 1199.1 513.2 1185.4C520.9 1171.7 532.3 1159.7 544.2 1149.7C556.1 1139.8 569.9 1131.1 584.6 1125.7C599.3 1120.2 616.5 1116.2 632.5 1117.0C648.6 1117.8 666.7 1122.6 680.8 1130.6C694.8 1138.7 707.9 1151.9 716.7 1165.4C725.4 1178.9 731.0 1195.8 733.3 1211.5C735.5 1227.2 734.3 1244.4 730.1 1259.5C725.8 1274.6 717.8 1290.2 707.6 1302.1C697.5 1314.0 683.3 1324.3 669.0 1330.9C654.8 1337.5 637.9 1341.0 622.1 1341.7C606.3 1342.3 589.4 1340.1 574.2 1334.9C559.1 1329.7 543.0 1321.5 531.2 1310.5C519.4 1299.5 508.4 1284.1 503.2 1268.9C498.0 1253.7 497.2 1234.9 500.0 1219.2C502.8 1203.6 516.7 1182.4 520.1 1175.1M608.1 1359.1C600.8 1356.5 577.4 1351.0 564.2 1343.3C550.9 1335.6 538.2 1325.1 528.5 1312.8C518.8 1300.5 510.2 1285.2 506.0 1269.6C501.8 1254.1 500.7 1235.8 503.2 1219.6C505.7 1203.5 512.2 1186.6 520.9 1172.9C529.5 1159.2 541.6 1146.3 554.8 1137.4C568.0 1128.6 584.4 1121.7 599.8 1119.8C615.2 1117.9 633.0 1120.2 647.4 1125.9C661.8 1131.6 675.7 1142.6 686.3 1154.1C696.8 1165.6 704.9 1180.5 710.8 1195.1C716.6 1209.8 720.6 1226.0 721.5 1242.2C722.3 1258.3 721.2 1276.5 715.8 1292.0C710.4 1307.5 700.6 1324.1 688.8 1335.2C677.0 1346.2 660.2 1354.5 644.9 1358.1C629.7 1361.7 612.3 1360.4 597.3 1356.9C582.3 1353.5 562.0 1340.7 555.0 1337.4M625.9 1349.2C619.7 1348.9 600.4 1350.0 588.2 1347.3C576.1 1344.5 563.9 1339.5 553.1 1332.9C542.3 1326.3 531.8 1317.7 523.7 1307.6C515.5 1297.5 508.2 1285.1 504.3 1272.4C500.5 1259.8 499.0 1244.9 500.7 1231.8C502.3 1218.7 507.6 1204.9 514.2 1193.8C520.9 1182.6 530.7 1172.9 540.5 1165.0C550.3 1157.2 561.6 1151.3 573.0 1146.8C584.4 1142.3 596.6 1139.1 608.9 1138.0C621.2 1137.0 634.6 1137.3 646.8 1140.7C659.0 1144.0 671.9 1149.9 682.0 1158.0C692.1 1166.1 701.3 1177.6 707.3 1189.3C713.3 1201.0 716.8 1215.1 717.9 1228.2C719.1 1241.2 717.5 1255.2 714.2 1267.7C710.9 1280.2 705.3 1292.6 698.2 1303.2C691.1 1313.8 676.0 1326.4 671.5 1331.0M513.4 1292.1C510.7 1284.3 498.9 1261.6 496.9 1245.4C494.9 1229.2 496.1 1210.5 501.6 1195.1C507.2 1179.6 518.0 1163.6 530.3 1152.7C542.6 1141.8 559.7 1133.9 575.3 1129.4C591.0 1125.0 608.3 1124.7 624.3 1126.1C640.2 1127.6 656.3 1131.5 671.0 1138.1C685.6 1144.7 701.0 1153.9 712.0 1165.8C723.0 1177.8 733.0 1194.1 737.2 1210.0C741.3 1225.8 740.8 1245.0 736.8 1261.0C732.8 1276.9 723.4 1292.8 713.0 1305.4C702.6 1317.9 688.7 1328.8 674.4 1336.4C660.1 1344.0 643.2 1349.5 627.1 1350.9C611.0 1352.4 593.1 1350.5 577.8 1345.3C562.6 1340.1 547.4 1330.6 535.5 1319.7C523.7 1308.7 513.5 1294.4 506.9 1279.6C500.3 1264.8 497.7 1239.1 495.9 1231.0M506.8 1228.2C510.1 1235.2 520.4 1257.1 526.6 1270.3C532.8 1283.5 540.2 1295.0 543.9 1307.4C547.6 1319.8 547.6 1328.0 548.9 1344.5C550.1 1361.0 550.7 1383.7 551.3 1406.4C551.9 1429.0 552.6 1461.0 552.6 1480.6C552.6 1500.2 551.5 1516.9 551.3 1524.1M508.8 1230.5C512.1 1237.4 522.6 1258.8 528.7 1271.9C534.8 1285.0 541.8 1296.7 545.3 1309.1C548.9 1321.5 548.8 1329.9 550.0 1346.3C551.3 1362.6 552.0 1384.6 552.6 1407.0C553.2 1429.4 553.6 1461.1 553.6 1480.7C553.6 1500.3 552.9 1517.1 552.8 1524.4M506.0 1225.1C509.1 1232.2 518.9 1254.4 525.0 1268.0C531.1 1281.5 539.0 1293.6 542.7 1306.4C546.5 1319.2 546.3 1328.0 547.5 1344.7C548.7 1361.4 549.5 1383.8 549.9 1406.7C550.3 1429.6 550.2 1462.3 550.0 1482.1C549.8 1501.9 548.8 1518.3 548.6 1525.5M440.0 1304.9C448.2 1301.2 472.2 1287.2 489.5 1282.7C506.8 1278.1 526.6 1277.3 543.9 1277.7C561.2 1278.1 579.4 1280.2 593.4 1285.1C607.4 1290.1 618.1 1297.5 628.0 1307.4C637.9 1317.3 646.2 1328.0 652.8 1344.5C659.4 1361.0 664.3 1387.8 667.6 1406.4C670.9 1424.9 673.4 1441.4 672.6 1455.8C671.7 1470.3 668.4 1481.6 662.7 1493.0C656.9 1504.3 642.0 1518.9 637.9 1524.1M434.4 1308.0C442.8 1303.9 467.7 1288.8 485.2 1283.7C502.6 1278.6 521.5 1277.3 539.1 1277.4C556.6 1277.5 575.9 1279.2 590.4 1284.1C604.9 1289.1 615.9 1297.2 626.0 1307.0C636.0 1316.7 643.8 1326.5 650.7 1342.7C657.5 1358.9 663.6 1385.7 667.1 1404.2C670.6 1422.6 672.6 1439.1 671.8 1453.3C670.9 1467.4 667.9 1477.8 662.2 1488.9C656.4 1500.0 641.4 1514.8 637.3 1519.9M439.5 1309.5C448.0 1305.8 473.2 1292.2 490.9 1287.4C508.5 1282.6 528.0 1280.7 545.5 1280.7C562.9 1280.7 581.1 1282.8 595.5 1287.4C609.9 1291.9 621.5 1298.6 631.8 1308.2C642.1 1317.9 650.6 1328.9 657.5 1345.3C664.4 1361.8 669.7 1388.6 673.2 1406.9C676.7 1425.1 679.3 1440.9 678.5 1454.9C677.8 1468.9 674.2 1480.0 668.6 1491.0C663.1 1501.9 649.1 1515.7 645.2 1520.6M440.0 1322.2C446.2 1317.7 464.7 1300.8 477.1 1295.0C489.5 1289.3 499.8 1288.4 514.2 1287.6C528.7 1286.8 547.2 1286.8 563.7 1290.1C580.2 1293.4 600.8 1300.4 613.2 1307.4C625.6 1314.4 633.8 1328.0 637.9 1332.1M750.5 1338.3C750.3 1344.7 747.4 1362.0 749.3 1376.7C751.1 1391.3 757.9 1413.0 761.6 1426.2C765.3 1439.4 770.7 1447.6 771.5 1455.8C772.3 1464.1 770.3 1470.3 766.6 1475.6C762.9 1481.0 752.1 1485.9 749.3 1488.0M724.5 1368.0C727.2 1371.5 737.9 1387.8 740.6 1389.0C743.3 1390.3 737.1 1377.7 740.6 1375.4C744.1 1373.2 755.6 1373.2 761.6 1375.4C767.6 1377.7 772.3 1381.8 776.5 1389.0C780.6 1396.3 783.3 1408.0 786.4 1418.7C789.5 1429.5 793.6 1447.6 795.0 1453.4M755.4 1285.1L753.0 1293.8M527.8 1060.0C527.2 1064.9 527.2 1079.0 524.1 1089.7C521.0 1100.4 515.7 1112.2 509.3 1124.3C502.9 1136.5 489.7 1156.3 485.8 1162.7M485.8 1162.7C492.6 1157.1 513.2 1140.4 526.6 1129.3C540.0 1118.1 559.6 1101.4 566.2 1095.9M566.2 1095.9C561.6 1101.4 547.6 1115.5 539.0 1129.3C530.3 1143.1 519.6 1162.3 514.2 1178.8C508.9 1195.2 508.0 1220.0 506.8 1228.2M453.6 1074.8C456.3 1074.0 464.5 1068.2 469.7 1069.9C474.8 1071.5 480.4 1077.7 484.5 1084.7C488.7 1091.7 494.8 1100.8 494.4 1112.0C494.0 1123.1 487.4 1135.9 482.1 1151.5C476.7 1167.2 469.3 1189.5 462.3 1206.0C455.3 1222.5 443.7 1243.1 440.0 1250.5M454.8 1077.3C455.5 1081.0 456.7 1090.9 458.6 1099.6C460.4 1108.2 464.7 1124.3 466.0 1129.3M483.3 1178.3C481.6 1180.0 470.3 1184.9 473.4 1188.6C476.5 1192.4 494.2 1197.3 501.9 1201.0C509.5 1204.7 515.3 1207.4 519.2 1210.9C523.1 1214.4 526.6 1220.0 525.4 1222.0C524.1 1224.1 514.0 1223.1 511.7 1223.3M475.9 1236.2L506.8 1225.8M475.9 1236.2L493.2 1257.9M650.3 1146.6C652.4 1150.7 656.5 1163.5 662.7 1171.3C668.8 1179.2 677.1 1187.8 687.4 1193.6C697.7 1199.4 718.3 1203.9 724.5 1206.0M677.5 1207.2C681.6 1206.8 694.4 1204.9 702.2 1204.7C710.1 1204.5 720.8 1205.8 724.5 1206.0M677.5 1207.2C679.2 1210.7 683.3 1218.5 687.4 1228.2C691.5 1237.9 698.1 1253.8 702.2 1265.3C706.4 1276.9 710.5 1292.1 712.1 1297.5M682.5 1213.4C681.4 1216.3 677.1 1226.8 676.3 1230.7C675.4 1234.6 677.3 1235.9 677.5 1236.9M703.5 1060.0C705.3 1063.7 710.7 1072.8 714.6 1082.3C718.5 1091.7 721.6 1103.7 727.0 1116.9C732.3 1130.1 743.5 1154.0 746.8 1161.4M718.3 1060.0C719.8 1063.3 723.7 1074.0 727.0 1079.8C730.3 1085.6 736.3 1093.0 738.1 1094.6C740.0 1096.3 738.1 1090.5 738.1 1089.7M602.0 1060.0C603.9 1061.2 610.3 1064.1 613.2 1067.4C616.1 1070.7 618.3 1077.7 619.4 1079.8M744.3 1183.7C744.5 1191.9 746.8 1218.7 745.5 1233.2C744.3 1247.6 741.2 1257.9 736.9 1270.3C732.6 1282.7 727.8 1295.9 719.6 1307.4C711.3 1318.9 698.9 1331.3 687.4 1339.6C675.9 1347.8 656.5 1354.0 650.3 1356.9M649.1 1295.0C648.8 1301.2 649.7 1319.8 647.8 1332.1C646.0 1344.5 639.6 1363.1 637.9 1369.3M678.7 1262.9C678.9 1264.9 681.4 1268.2 680.0 1275.2C678.5 1282.2 671.7 1300.0 670.1 1304.9M633.0 1283.9L655.2 1281.4M724.5 1196.1C724.9 1202.3 729.9 1214.6 727.0 1233.2C724.1 1251.7 710.5 1295.0 707.2 1307.4M662.7 1381.6C664.1 1389.9 669.7 1416.7 671.3 1431.1C673.0 1445.5 674.0 1456.7 672.6 1468.2C671.1 1479.8 666.4 1491.1 662.7 1500.4C659.0 1509.7 652.4 1520.2 650.3 1524.1M658.4 1388.1C659.9 1396.0 665.6 1421.5 667.5 1435.5C669.5 1449.6 671.0 1461.1 669.9 1472.2C668.9 1483.4 664.8 1493.4 661.2 1502.5C657.6 1511.6 650.5 1522.6 648.4 1526.6M669.2 1386.7C670.5 1394.9 676.0 1421.7 677.3 1435.8C678.7 1450.0 679.2 1460.6 677.2 1471.8C675.2 1483.0 670.0 1493.9 665.4 1503.1C660.8 1512.3 652.3 1522.8 649.6 1526.8M663.6 1381.5C665.0 1391.0 672.9 1419.9 671.8 1438.5C670.6 1457.2 664.9 1476.9 656.8 1493.6C648.7 1510.4 636.5 1526.1 623.2 1539.1C609.9 1552.2 594.0 1563.6 577.1 1572.1C560.1 1580.7 541.0 1587.8 521.7 1590.4C502.4 1593.1 480.5 1593.1 461.3 1588.2C442.2 1583.2 421.9 1573.3 406.7 1560.8C391.6 1548.2 378.8 1530.3 370.5 1513.0C362.2 1495.6 358.5 1475.4 357.2 1456.7C355.8 1438.1 358.2 1419.1 362.6 1401.3C367.0 1383.5 373.8 1365.7 383.4 1349.9C393.1 1334.0 405.7 1318.1 420.7 1306.4C435.7 1294.7 454.6 1284.5 473.4 1279.5C492.2 1274.4 514.0 1273.2 533.4 1275.9C552.9 1278.5 573.0 1285.9 590.0 1295.4C607.0 1304.9 627.9 1326.7 635.4 1332.9M401.8 1338.3C409.5 1333.4 431.3 1316.1 447.7 1308.5C464.1 1300.8 481.9 1294.8 500.1 1292.5C518.2 1290.2 538.5 1290.0 556.6 1294.7C574.7 1299.3 594.1 1308.4 608.8 1320.3C623.5 1332.3 636.4 1349.5 644.7 1366.6C653.1 1383.7 657.5 1404.1 658.6 1422.9C659.7 1441.7 656.9 1461.7 651.3 1479.4C645.8 1497.2 636.7 1515.0 625.2 1529.5C613.8 1544.0 598.6 1557.3 582.6 1566.3C566.6 1575.3 547.5 1581.3 529.3 1583.7C511.2 1586.2 491.6 1584.8 473.7 1580.8C455.7 1576.8 437.5 1569.6 421.7 1559.6C405.9 1549.7 390.1 1536.5 378.9 1521.1C367.7 1505.8 358.2 1486.4 354.5 1467.6C350.7 1448.9 351.7 1427.1 356.5 1408.8C361.3 1390.4 378.7 1366.2 383.2 1357.7M619.5 1552.4C610.3 1557.1 583.9 1574.8 564.4 1580.7C544.8 1586.6 522.6 1589.1 502.2 1587.6C481.7 1586.0 460.4 1580.0 441.9 1571.4C423.5 1562.8 405.9 1550.2 391.6 1535.9C377.3 1521.6 364.4 1504.2 356.1 1485.8C347.8 1467.4 341.8 1445.8 341.6 1425.6C341.4 1405.4 346.1 1382.7 355.0 1364.4C363.9 1346.0 379.1 1328.4 395.1 1315.5C411.0 1302.6 431.5 1293.4 450.8 1287.1C470.2 1280.8 491.0 1278.2 511.1 1277.7C531.3 1277.3 552.2 1279.1 571.8 1284.5C591.4 1289.9 612.2 1298.2 628.8 1310.3C645.4 1322.4 661.6 1339.2 671.4 1357.1C681.3 1375.0 687.1 1397.4 688.0 1417.6C688.9 1437.9 684.1 1459.7 676.7 1478.5C669.3 1497.3 649.2 1521.6 643.8 1530.2M387.5 1346.4C395.4 1339.9 417.6 1316.0 435.0 1307.3C452.3 1298.7 473.0 1295.2 491.8 1294.3C510.6 1293.4 529.8 1296.3 547.8 1302.1C565.8 1307.8 584.5 1316.2 599.5 1328.7C614.6 1341.1 629.7 1358.4 638.2 1376.9C646.6 1395.5 651.2 1419.4 650.2 1440.1C649.3 1460.8 642.0 1483.3 632.5 1501.3C623.1 1519.3 608.7 1535.7 593.6 1548.1C578.5 1560.6 560.2 1570.7 542.0 1576.1C523.7 1581.5 502.8 1583.4 484.1 1580.5C465.4 1577.6 445.7 1569.5 429.7 1558.6C413.7 1547.8 399.1 1532.0 388.3 1515.3C377.6 1498.5 368.9 1478.1 365.2 1457.9C361.4 1437.7 360.9 1414.3 365.8 1394.2C370.7 1374.2 381.5 1352.8 394.6 1337.6C407.8 1322.4 436.5 1308.9 444.9 1303.2M670.0 1450.7C666.9 1459.8 660.6 1488.8 651.8 1505.6C642.9 1522.4 630.9 1538.4 616.9 1551.7C602.8 1564.9 585.9 1577.6 567.6 1585.3C549.3 1593.1 527.1 1598.6 506.8 1598.1C486.6 1597.5 463.8 1591.5 446.1 1581.9C428.3 1572.4 412.0 1556.5 400.3 1540.7C388.6 1524.9 380.8 1505.5 375.6 1487.1C370.5 1468.7 368.6 1449.1 369.6 1430.3C370.6 1411.4 374.1 1391.5 381.6 1373.9C389.2 1356.3 400.7 1338.2 414.9 1324.7C429.2 1311.3 448.3 1299.8 467.2 1293.4C486.0 1286.9 508.1 1284.6 528.1 1286.1C548.1 1287.5 569.1 1293.4 587.1 1302.1C605.0 1310.8 622.5 1323.7 635.6 1338.4C648.6 1353.2 659.4 1372.1 665.2 1390.5C670.9 1409.0 669.3 1439.5 670.1 1449.3M551.4 1565.3C543.2 1567.4 518.7 1577.4 502.2 1577.9C485.7 1578.3 467.8 1574.9 452.4 1568.0C437.0 1561.2 421.9 1549.9 409.8 1536.9C397.7 1524.0 387.1 1507.5 379.8 1490.3C372.5 1473.1 367.0 1453.1 365.8 1433.8C364.5 1414.5 366.4 1392.7 372.3 1374.5C378.2 1356.2 389.0 1337.5 401.3 1324.2C413.6 1310.8 430.3 1300.6 446.1 1294.3C461.8 1288.0 479.4 1286.2 495.8 1286.4C512.1 1286.6 528.6 1289.8 544.1 1295.6C559.7 1301.3 575.7 1309.4 588.9 1321.0C602.1 1332.7 615.3 1348.2 623.3 1365.3C631.4 1382.4 636.6 1404.0 637.1 1423.5C637.6 1443.0 633.2 1464.5 626.5 1482.3C619.8 1500.1 608.7 1516.9 596.9 1530.4C585.0 1543.9 562.2 1557.8 555.3 1563.3M492.7 1297.7C496.8 1302.2 509.9 1313.7 517.1 1324.9C524.3 1336.0 531.1 1349.4 536.0 1364.6C540.8 1379.7 545.2 1398.0 546.4 1415.9C547.6 1433.8 546.6 1455.0 543.1 1472.1C539.6 1489.1 532.8 1506.2 525.5 1518.4C518.1 1530.5 508.4 1539.4 499.2 1545.0C490.0 1550.5 479.7 1552.5 470.2 1551.6C460.7 1550.7 450.7 1546.7 442.1 1539.3C433.5 1531.9 424.8 1520.6 418.5 1507.4C412.3 1494.2 407.1 1476.9 404.3 1459.9C401.4 1442.9 400.5 1423.4 401.4 1405.6C402.4 1387.7 405.3 1368.6 410.1 1352.7C414.8 1336.8 421.9 1320.9 429.9 1310.4C437.9 1299.8 448.4 1292.1 458.0 1289.4C467.6 1286.8 478.4 1289.4 487.6 1294.3C496.8 1299.2 508.8 1314.8 513.0 1318.9M539.5 1505.5C535.6 1511.2 525.1 1531.1 516.5 1540.1C508.0 1549.1 498.3 1556.0 488.4 1559.5C478.6 1563.0 467.4 1564.3 457.4 1560.9C447.3 1557.4 436.2 1549.9 427.9 1538.9C419.6 1527.8 412.1 1511.1 407.7 1494.7C403.2 1478.3 401.3 1458.1 401.1 1440.3C400.9 1422.4 403.1 1404.1 406.3 1387.6C409.4 1371.0 414.0 1354.9 419.9 1340.9C425.8 1327.0 433.3 1313.1 441.8 1303.8C450.3 1294.4 460.9 1286.9 471.0 1284.6C481.2 1282.4 492.7 1284.7 502.5 1290.4C512.2 1296.2 521.9 1306.9 529.5 1319.0C537.1 1331.1 543.7 1347.0 548.2 1363.2C552.6 1379.4 555.5 1398.4 556.0 1416.3C556.5 1434.1 554.7 1453.6 551.1 1470.1C547.6 1486.6 537.3 1507.8 534.5 1515.3M540.2 1330.0C541.5 1338.1 546.4 1357.1 548.3 1378.8C550.2 1400.5 551.3 1433.1 551.6 1460.2C551.8 1487.3 551.6 1515.5 549.9 1541.6C548.3 1567.6 543.2 1604.0 541.8 1616.5M541.8 1430.9C542.3 1435.8 544.8 1448.8 545.1 1460.2C545.3 1471.6 545.1 1489.0 543.4 1499.3C541.8 1509.6 541.0 1515.0 535.3 1522.1C529.6 1529.1 519.0 1536.2 509.2 1541.6C499.5 1547.0 482.1 1552.4 476.7 1554.6M398.6 1548.1C403.5 1547.3 414.8 1543.5 427.9 1543.2C440.9 1542.9 460.4 1544.6 476.7 1546.5C493.0 1548.4 517.4 1553.3 525.5 1554.6M403.5 1554.6C410.8 1554.1 432.5 1550.8 447.4 1551.4C462.3 1551.9 477.2 1555.2 493.0 1557.9C508.7 1560.6 533.7 1566.0 541.8 1567.6M401.8 1546.5C411.6 1546.2 440.3 1542.7 460.4 1544.8C480.5 1547.0 512.0 1557.1 522.3 1559.5M458.8 1564.4C464.5 1562.7 481.8 1556.8 493.0 1554.6C504.1 1552.4 520.1 1551.9 525.5 1551.4M473.4 1572.5L509.2 1557.9M444.1 1562.7C452.3 1563.0 480.5 1563.0 493.0 1564.4C505.4 1565.7 514.7 1569.8 519.0 1570.9M356.2 1596.3C362.8 1595.7 378.0 1593.2 395.3 1593.0C412.7 1592.9 438.7 1594.1 460.4 1595.3C482.1 1596.5 507.1 1599.1 525.5 1600.2C544.0 1601.3 563.5 1601.5 571.1 1601.8M369.3 1579.0C379.0 1580.1 407.2 1583.1 427.9 1585.5C448.5 1588.0 474.0 1590.4 493.0 1593.7C512.0 1596.9 531.5 1603.2 541.8 1605.1C552.1 1607.0 552.6 1605.1 554.8 1605.1M375.8 1592.0C384.5 1592.6 408.3 1594.4 427.9 1595.3C447.4 1596.2 471.5 1596.1 493.0 1597.6C514.4 1599.0 545.9 1603.0 556.4 1604.1M369.3 1595.3C373.6 1596.0 386.1 1599.5 395.3 1599.5C404.5 1599.5 419.7 1596.0 424.6 1595.3M253.7 1330.0C255.6 1335.4 257.8 1350.6 265.1 1362.6C272.4 1374.5 283.0 1390.5 297.7 1401.6C312.3 1412.7 343.8 1424.7 353.0 1429.3M235.8 1378.8C236.9 1385.9 237.4 1407.6 242.3 1421.1C247.2 1434.7 254.3 1448.3 265.1 1460.2C276.0 1472.1 293.0 1483.8 307.4 1492.8C321.8 1501.7 345.4 1509.3 351.4 1513.9C357.3 1518.5 351.1 1519.3 343.2 1520.4C335.4 1521.5 310.7 1520.4 304.2 1520.4M248.8 1330.0C247.2 1335.4 240.4 1351.7 239.1 1362.6C237.7 1373.4 239.1 1382.6 240.7 1395.1C242.3 1407.6 247.5 1430.4 248.8 1437.4M279.8 1502.5C285.4 1508.5 303.4 1528.0 313.9 1538.3C324.5 1548.6 334.0 1557.3 343.2 1564.4C352.5 1571.4 364.9 1577.9 369.3 1580.7M317.2 1457.0L318.2 1484.6M333.5 1512.3C334.0 1519.9 332.9 1545.4 336.7 1557.9C340.5 1570.3 346.5 1580.1 356.2 1587.2C366.0 1594.2 388.8 1598.0 395.3 1600.2M372.5 1525.3C374.2 1531.8 376.3 1553.5 382.3 1564.4C388.3 1575.2 395.3 1583.9 408.3 1590.4C421.4 1596.9 443.6 1600.7 460.4 1603.4C477.2 1606.2 501.1 1606.2 509.2 1606.7M569.5 1572.5C572.5 1573.9 583.0 1577.1 587.4 1580.7C591.7 1584.2 595.0 1588.8 595.5 1593.7C596.1 1598.6 594.2 1605.3 590.6 1609.9C587.1 1614.6 581.4 1620.3 574.3 1621.3C567.3 1622.4 552.6 1617.3 548.3 1616.5M593.9 1566.0C598.2 1567.4 612.9 1570.1 619.9 1574.1C627.0 1578.2 634.0 1585.0 636.2 1590.4C638.4 1595.8 635.7 1601.5 632.9 1606.7C630.2 1611.8 622.1 1618.9 619.9 1621.3M553.2 1522.1L567.8 1521.4M343.2 1411.4C344.9 1406.0 348.7 1389.7 353.0 1378.8C357.3 1368.0 364.4 1354.4 369.3 1346.3C374.2 1338.1 380.1 1332.7 382.3 1330.0M452.2 1227.1C446.7 1233.9 428.7 1255.8 419.4 1268.1C410.0 1280.4 402.6 1291.6 395.9 1300.9C389.3 1310.3 385.0 1315.8 379.5 1324.4C374.1 1333.0 367.4 1343.2 363.1 1352.5C358.8 1361.8 355.3 1375.3 353.7 1379.9M431.1 1261.1C427.6 1266.2 416.6 1281.0 410.0 1291.6C403.4 1302.1 396.7 1312.7 391.2 1324.4C385.8 1336.1 380.3 1352.6 377.2 1361.9C374.1 1371.1 373.3 1376.9 372.5 1379.9M428.7 1268.1C424.5 1274.4 410.4 1293.1 403.0 1305.6C395.5 1318.1 389.7 1330.7 384.2 1343.1C378.7 1355.5 372.5 1373.8 370.2 1379.9M419.4 1275.2C415.5 1281.8 402.2 1302.1 395.9 1315.0C389.7 1327.9 385.4 1341.7 381.9 1352.5C378.4 1363.3 376.0 1375.3 374.8 1379.9M484.2 1157.5C478.6 1169.3 462.6 1208.2 450.8 1228.3C439.0 1248.5 425.8 1260.3 413.3 1278.3C400.8 1296.4 386.3 1318.6 375.8 1336.7C365.4 1354.7 356.0 1374.2 350.8 1386.7C345.6 1399.2 345.6 1407.5 344.6 1411.7M430.0 1265.8C421.7 1276.2 392.5 1309.6 380.0 1328.3C367.5 1347.1 359.2 1370.0 355.0 1378.3M413.3 1270.0C405.0 1283.9 374.4 1330.4 363.3 1353.3C352.2 1376.2 349.4 1398.5 346.7 1407.5M355.0 1370.0C353.6 1381.1 346.7 1415.8 346.7 1436.7C346.7 1457.5 350.8 1481.1 355.0 1495.0C359.2 1508.9 368.9 1515.8 371.7 1520.0M363.3 1353.3C361.6 1363.1 354.0 1392.2 352.9 1411.7C351.9 1431.1 353.6 1452.6 357.1 1470.0C360.6 1487.4 371.0 1508.2 373.8 1515.8M375.8 1315.8C373.1 1324.9 363.3 1352.6 359.2 1370.0C355.0 1387.4 352.2 1411.7 350.8 1420.0M407.1 1278.3C404.0 1281.8 393.5 1290.8 388.3 1299.2C383.1 1307.5 377.9 1323.5 375.8 1328.3M430.0 1263.8C427.2 1265.8 418.9 1269.7 413.3 1276.2C407.8 1282.8 399.4 1298.8 396.7 1303.3M327.9 1445.0C327.6 1450.6 324.4 1463.1 325.8 1478.3C327.2 1493.6 329.3 1520.0 336.2 1536.7C343.2 1553.3 362.3 1571.4 367.5 1578.3M340.4 1411.7C339.4 1422.1 334.5 1458.2 334.2 1474.2C333.8 1490.1 335.6 1499.9 338.3 1507.5C341.1 1515.1 354.3 1517.6 350.8 1520.0C347.4 1522.4 326.5 1522.4 317.5 1522.1C308.5 1521.7 300.1 1518.6 296.7 1517.9"/>
<path class="skd" stroke="#34345e" stroke-opacity=".75" d="M464.5 994.7C472.7 994.2 497.7 993.5 513.7 991.6C529.8 989.8 545.0 987.5 560.6 983.4C576.2 979.3 591.9 973.3 607.5 967.0C623.1 960.8 640.7 953.7 654.4 945.9C668.0 938.1 681.1 926.2 689.5 920.2C697.9 914.1 702.2 911.4 704.8 909.6M464.5 994.7C468.8 994.6 481.3 994.6 490.3 994.0C499.3 993.4 513.7 991.4 518.4 990.9M632.1 938.9C634.3 938.1 638.2 935.8 645.0 934.2C651.8 932.7 668.2 929.7 673.1 929.5C678.0 929.3 677.4 931.3 674.3 933.0C671.2 934.8 660.8 938.1 654.4 940.1C647.9 942.0 638.7 944.0 635.6 944.8M654.4 941.2C655.5 944.8 659.8 955.5 661.4 962.3C663.0 969.2 663.4 978.9 663.7 982.3M663.7 982.3L682.5 981.1M663.7 982.3C661.0 985.2 652.2 995.0 647.3 999.8C642.5 1004.7 636.6 1009.6 634.5 1011.6M634.5 941.2C635.2 945.2 637.2 956.1 639.1 964.7C641.1 973.3 644.8 985.8 646.2 992.8C647.5 999.8 647.1 1004.5 647.3 1006.9M652.0 943.6C653.0 946.3 656.3 954.5 657.9 960.0C659.5 965.5 661.6 971.7 661.4 976.4C661.2 981.1 659.5 983.8 656.7 988.1C654.0 992.4 647.0 999.8 645.0 1002.2M544.5 923.9C545.4 926.7 548.2 935.0 549.8 940.5C551.5 946.1 553.6 954.4 554.3 957.2M545.2 924.2C546.1 927.0 549.0 935.2 550.7 940.8C552.4 946.3 554.5 954.6 555.2 957.4M546.0 924.5C546.9 927.2 549.8 935.5 551.5 941.0C553.2 946.5 555.4 954.8 556.2 957.6M546.7 924.7C547.6 927.5 550.6 935.7 552.4 941.2C554.1 946.7 556.3 955.0 557.1 957.7M547.5 925.0C548.4 927.8 551.5 936.0 553.2 941.5C555.0 947.0 557.2 955.2 558.0 957.9M548.2 925.3C549.2 928.0 552.3 936.2 554.1 941.7C555.9 947.2 558.2 955.4 559.0 958.1M632.6 892.5L643.1 922.0M633.3 892.7L643.8 921.7M634.1 892.8L644.5 921.3M634.9 893.0L645.2 921.0M635.6 893.2L645.9 920.6M634.9 945.8C638.3 945.2 648.6 944.6 655.0 942.1C661.4 939.7 670.5 933.3 673.2 931.2C676.0 929.1 674.7 928.9 671.4 929.4C668.1 929.8 656.2 933.2 653.2 933.9M634.0 945.8C634.8 949.1 636.6 959.4 638.6 965.8C640.6 972.2 644.5 977.4 645.9 984.1C647.2 990.7 646.6 1002.3 646.8 1005.9M655.0 944.0C655.9 946.4 659.2 952.8 660.5 958.5C661.7 964.3 662.3 974.6 662.3 978.6C662.3 982.5 660.8 981.6 660.5 982.2M660.5 982.2L680.5 981.3M660.5 982.2C658.6 984.4 653.8 990.4 649.5 995.0C645.3 999.5 637.4 1007.1 634.9 1009.6M640.4 933.0C641.0 935.4 642.5 942.7 644.1 947.6C645.6 952.5 648.6 959.7 649.5 962.2M736.9 1196.1C735.6 1201.4 733.6 1216.7 729.5 1228.2C725.3 1239.8 719.2 1252.1 712.1 1265.3C705.1 1278.5 695.6 1292.1 687.4 1307.4C679.2 1322.7 670.1 1340.4 662.7 1356.9C655.2 1373.4 649.5 1389.9 642.9 1406.4C636.3 1422.9 628.9 1440.2 623.1 1455.8C617.3 1471.5 611.9 1489.0 608.2 1500.4C604.5 1511.8 602.0 1520.2 600.8 1524.1M737.7 1199.2C736.6 1204.3 734.7 1218.9 730.9 1230.3C727.2 1241.7 721.8 1254.4 715.2 1267.6C708.5 1280.8 699.0 1294.5 691.0 1309.6C682.9 1324.8 674.3 1342.1 666.8 1358.5C659.3 1374.9 652.5 1391.7 646.0 1408.1C639.5 1424.5 633.0 1441.2 627.6 1456.7C622.1 1472.1 616.9 1489.6 613.1 1500.8C609.4 1512.1 606.4 1520.4 605.1 1524.3M736.0 1190.9C734.9 1196.3 733.6 1211.6 729.5 1223.2C725.3 1234.9 718.2 1247.2 711.0 1260.6C703.8 1274.1 694.5 1288.2 686.1 1303.7C677.8 1319.3 668.7 1337.2 660.9 1353.7C653.2 1370.2 646.5 1386.0 639.5 1402.6C632.5 1419.2 624.9 1437.3 619.0 1453.3C613.0 1469.3 607.6 1487.0 603.6 1498.3C599.7 1509.7 596.5 1517.6 595.1 1521.4M732.7 1196.2C731.6 1201.6 729.9 1216.8 725.9 1228.6C721.8 1240.4 715.3 1253.4 708.3 1267.0C701.2 1280.6 691.6 1294.9 683.7 1310.1C675.9 1325.3 668.1 1341.6 661.0 1358.1C653.9 1374.6 647.6 1392.1 641.3 1408.8C635.0 1425.5 628.6 1442.7 622.9 1458.3C617.3 1473.9 611.0 1491.1 607.4 1502.5C603.8 1513.8 602.4 1522.3 601.4 1526.2M736.6 1189.8C735.4 1195.4 733.6 1211.7 729.6 1223.4C725.7 1235.1 719.8 1246.9 713.0 1260.2C706.3 1273.5 697.5 1287.8 689.1 1303.2C680.7 1318.6 670.5 1335.8 662.8 1352.5C655.2 1369.3 649.9 1386.6 643.4 1403.4C636.8 1420.2 629.1 1437.5 623.3 1453.4C617.5 1469.3 612.0 1487.4 608.5 1499.0C604.9 1510.7 603.2 1519.1 602.2 1523.1M742.8 1196.4C741.3 1201.8 738.4 1216.9 733.9 1228.7C729.3 1240.6 722.9 1254.3 715.6 1267.8C708.4 1281.3 698.9 1294.5 690.5 1309.8C682.0 1325.1 672.6 1343.0 664.8 1359.6C656.9 1376.1 650.0 1392.5 643.2 1409.2C636.4 1425.9 629.6 1443.7 623.9 1459.7C618.3 1475.6 613.2 1493.3 609.2 1505.0C605.2 1516.8 601.4 1526.0 599.9 1530.2M731.0 1192.0C730.0 1197.6 728.9 1213.9 725.1 1225.8C721.3 1237.8 715.2 1250.2 708.2 1263.7C701.2 1277.1 691.2 1291.0 683.0 1306.5C674.9 1322.0 666.4 1340.2 659.5 1356.8C652.5 1373.4 647.5 1389.4 641.2 1406.1C634.8 1422.8 626.9 1441.3 621.3 1457.3C615.6 1473.3 610.4 1490.6 607.0 1502.1C603.6 1513.5 601.9 1522.0 600.9 1526.0M511.7 1238.1C515.5 1245.6 526.6 1267.4 534.0 1282.7C541.4 1297.9 552.6 1321.8 556.3 1329.7M512.7 1237.7C516.3 1245.0 527.0 1266.6 534.3 1281.6C541.7 1296.6 553.1 1320.0 556.8 1327.6M515.0 1235.2C518.5 1242.9 528.8 1265.4 535.9 1281.2C543.0 1297.0 553.9 1322.0 557.5 1330.2M541.4 1522.6L598.3 1495.4M541.0 1524.4L596.7 1495.4M542.7 1524.9L598.8 1495.6M540.6 1522.2L598.1 1495.5M542.3 1522.2L599.3 1494.3M398.6 1547.4C408.9 1547.1 439.3 1544.2 460.4 1545.5C481.6 1546.8 514.7 1553.6 525.5 1555.3M399.9 1545.4C410.1 1545.2 439.9 1542.9 460.7 1544.5C481.5 1546.0 514.0 1553.0 524.7 1554.7M356.2 1596.3C373.6 1596.1 424.6 1594.3 460.4 1595.3C496.2 1596.3 552.6 1601.0 571.1 1602.1M354.6 1594.3C372.2 1594.3 424.0 1593.1 460.1 1594.7C496.2 1596.2 552.8 1602.0 571.4 1603.5M425.8 1267.9C422.4 1271.0 411.2 1278.7 405.0 1286.7C398.8 1294.7 391.1 1311.0 388.3 1315.8M425.8 1267.4C422.2 1270.8 410.6 1279.2 404.2 1287.8C397.8 1296.3 390.4 1313.6 387.6 1318.8M424.4 1268.2C420.9 1271.4 409.7 1279.4 403.3 1287.4C396.8 1295.5 388.7 1311.6 385.8 1316.5"/>
<path fill="#2c2c5a" fill-opacity=".38" stroke="#2c2c5a" stroke-opacity=".55" stroke-width=".5" d="M544.9 922.0C545.9 921.6 547.4 921.7 549.4 924.8C551.4 928.0 555.1 935.1 556.9 940.8C558.6 946.5 560.5 956.5 559.9 959.1C559.4 961.6 555.9 959.1 553.6 956.2C551.3 953.4 547.8 946.5 546.1 941.7C544.4 937.0 543.5 930.9 543.3 927.7C543.1 924.4 543.9 922.5 544.9 922.0ZM632.3 892.0C632.1 889.5 634.1 890.9 635.6 893.2C637.1 895.5 639.5 901.6 641.2 906.1C643.0 910.6 645.9 917.4 646.2 920.2C646.5 922.9 644.6 924.5 643.1 922.5C641.6 920.5 639.1 913.5 637.3 908.4C635.5 903.4 632.6 894.6 632.3 892.0Z"/>
</g>
<circle cx="974.600" cy="969.300" r="1.050" fill="#2e2e4a"/>
</g>
<!--/SKETCH-->
<!--TOPBAR-->
<g id="topbar">
<path d="M234 0H1302V87a9 9 0 0 1-9 9H243a9 9 0 0 1-9-9Z" fill="#000" opacity=".3" filter="url(#sh2)"/>
<path d="M235 0H1301V84.500a9.500 9.500 0 0 1-9.500 9.500H244.500a9.500 9.500 0 0 1-9.500-9.500Z" fill="url(#tbg)"/>
<rect x="571" y="0" width="594" height="94" fill="url(#tbm)"/>
<rect x="235" y="0" width="1066" height="2" fill="#efefef"/>
</g>

<g id="tbicons">
<defs>
<linearGradient id="lg1" x1="0" y1="0" x2="0" y2="1"><stop offset="0" stop-color="#fbfbfb"/><stop offset="1" stop-color="#ececec"/></linearGradient>
<linearGradient id="mvh" x1="0" y1="0" x2="1" y2="0"><stop offset="0" stop-color="#333"/><stop offset=".2" stop-color="#4a4a4a"/><stop offset=".36" stop-color="#a8a8a8"/><stop offset=".5" stop-color="#d2d2d2"/><stop offset=".64" stop-color="#a8a8a8"/><stop offset=".8" stop-color="#4a4a4a"/><stop offset="1" stop-color="#333"/></linearGradient>
<linearGradient id="mvv" x1="0" y1="0" x2="0" y2="1"><stop offset="0" stop-color="#333"/><stop offset=".2" stop-color="#4a4a4a"/><stop offset=".36" stop-color="#a8a8a8"/><stop offset=".5" stop-color="#d2d2d2"/><stop offset=".64" stop-color="#a8a8a8"/><stop offset=".8" stop-color="#4a4a4a"/><stop offset="1" stop-color="#333"/></linearGradient>
<linearGradient id="curg" x1="0" y1="0" x2="1" y2="1"><stop offset="0" stop-color="#666"/><stop offset="1" stop-color="#2a2a2a"/></linearGradient>
<linearGradient id="bkt" x1="0" y1="0" x2="0" y2="1"><stop offset="0" stop-color="#fafafa"/><stop offset="1" stop-color="#e4e4e4"/></linearGradient>
<linearGradient id="symg" x1="0" y1="0" x2="0" y2="1"><stop offset="0" stop-color="#8a8a8a"/><stop offset=".25" stop-color="#626262"/><stop offset=".5" stop-color="#5a5a5a"/><stop offset=".75" stop-color="#626262"/><stop offset="1" stop-color="#8a8a8a"/></linearGradient>
</defs>
<!-- list -->
<rect x="278" y="30" width="38.500" height="32.500" rx="4" fill="url(#lg1)" stroke="#676767" stroke-width="1.700"/>
<g fill="#666"><circle cx="287" cy="38.200" r="2"/><circle cx="287" cy="46.200" r="2"/><circle cx="287" cy="54.200" r="2"/></g>
<g stroke="#666" stroke-width="1.600" stroke-linecap="round"><path d="M293.500 38.200H308.500M293.500 46.200H308.500M293.500 54.200H308.500"/></g>
<!-- undo -->
<path id="undo" d="M363.100 48.100L385 33V41.300H403C411 41.300 416 38 419.200 33.400C418 47 411 54.900 400 54.900H385V63.100Z" fill="#686868"/>
<!-- redo -->
<path transform="rotate(180 446.900 48.100)" d="M363.100 48.100L385 33V41.300H403C411 41.300 416 38 419.200 33.400C418 47 411 54.900 400 54.900H385V63.100Z" fill="#ababab"/>
<!-- selection -->
<rect x="618.900" y="33.700" width="32.600" height="24.300" fill="url(#lg1)" stroke="#444" stroke-width="1.500" stroke-dasharray="5.200 2.600"/>
<path d="M642 45.200L659.600 60.800L642 68.600Z" fill="url(#curg)"/>
<!-- move -->
<rect x="724" y="47.500" width="36" height="3" fill="url(#mvh)"/>
<rect x="740.500" y="31" width="3" height="36" fill="url(#mvv)"/>
<g fill="#333"><path d="M742 29L748 35.500H736Z"/><path d="M742 69L748 62.500H736Z"/><path d="M722 49L728.500 43V55Z"/><path d="M762 49L755.500 43V55Z"/></g>
<!-- bucket -->
<path d="M834.100 32V67.500C834.100 70 841.500 71.800 850.200 71.800C858.900 71.800 866.100 70 866.100 67.500V32Z" fill="url(#bkt)" stroke="#8e8e8e" stroke-width="1.800"/>
<path d="M846 60.800C850 59.500 853 56.200 857 56.200C861 56.200 863 57.300 865.200 57.800V64H846Z" fill="#b2b2b2"/>
<path d="M835 59.900C840 60 843.500 60.800 847 61.900C851 63.200 853.500 64 856.500 64C860 64 862.500 62.800 865.200 62.400V67.300C865.200 69.500 858.500 70.900 850.200 70.900C841.900 70.900 835 69.500 835 67.300Z" fill="#757575"/>
<ellipse cx="850.200" cy="31.100" rx="17.900" ry="4.400" fill="#868686"/>
<ellipse cx="850.300" cy="31.400" rx="13.900" ry="1.900" fill="#fdfdfd"/>
<path d="M840 41.600C833.500 43.500 828.300 49 828.300 54C828.300 57.500 830.500 59.500 833.300 60.400" fill="none" stroke="#484848" stroke-width="1.600" stroke-linecap="round"/>
<ellipse cx="840.400" cy="41.400" rx="1.500" ry="3" fill="#555"/>
<!-- ruler -->
<ellipse cx="956" cy="48.300" rx="17.300" ry="19.900" fill="none" stroke="#5a5a5a" stroke-width="1.900" stroke-dasharray="3.300 4.500"/>
<path d="M935.300 61.300L969.400 27.300L979.700 37.300L945.100 71.500Z" fill="url(#lg1)" stroke="#4a4a4a" stroke-width="2" stroke-linejoin="round"/>
<path d="M943.2 53.4l3.200 3.100M949.2 47.5l3.200 3.100M955.1 41.6l3.200 3.100M961.0 35.7l3.200 3.100M966.4 30.3l3.200 3.100M940.5 56.1l2 1.900M946.2 50.4l2 1.900M952.1 44.5l2 1.900M958.0 38.6l2 1.900M963.7 33.0l2 1.900" stroke="#505050" stroke-width="1.600" fill="none"/>
<!-- symmetry -->
<path d="M1060 27.100V70.800" stroke="#626262" stroke-width="2" stroke-dasharray="7.600 4.400" fill="none"/>
<path id="symc" d="M1051.21 28.95C1049.73 29.28 1044.70 29.63 1042.32 30.95C1039.94 32.27 1037.55 35.21 1036.94 36.88C1036.33 38.55 1037.47 39.84 1038.67 40.98C1039.87 42.12 1042.62 42.80 1044.14 43.71C1045.66 44.63 1047.26 45.46 1047.79 46.45C1048.32 47.44 1047.94 48.73 1047.33 49.64C1046.73 50.55 1045.59 51.01 1044.14 51.92C1042.70 52.83 1039.87 53.82 1038.67 55.11C1037.47 56.40 1036.71 58.07 1036.94 59.67C1037.17 61.26 1037.44 63.21 1040.04 64.68C1042.65 66.15 1050.49 67.87 1052.58 68.51L1052.58 68.33C1051.02 67.72 1045.32 65.97 1043.23 64.68C1041.14 63.39 1040.27 61.87 1040.04 60.58C1039.81 59.29 1040.72 58.07 1041.86 56.93C1043.00 55.79 1045.21 54.81 1046.88 53.74C1048.55 52.68 1050.89 51.50 1051.89 50.55C1052.89 49.60 1052.82 48.73 1052.89 48.04C1052.97 47.36 1053.35 47.40 1052.35 46.45C1051.34 45.50 1048.70 43.49 1046.88 42.35C1045.05 41.21 1042.55 40.60 1041.41 39.61C1040.27 38.63 1039.59 37.64 1040.04 36.42C1040.50 35.21 1042.28 33.54 1044.14 32.32C1046.00 31.10 1050.03 29.66 1051.21 29.13Z" fill="url(#symg)"/>
<use href="#symc" transform="matrix(-1 0 0 1 2120 0)"/>
<!-- shapes (clipped) -->
<clipPath id="cshape"><rect x="1140" y="20" width="25" height="60"/></clipPath>
<g clip-path="url(#cshape)">
<rect x="1147.100" y="44.100" width="30" height="23.700" fill="url(#lg1)" stroke="#383838" stroke-width="2"/>
<circle cx="1173.400" cy="43.200" r="14.400" fill="none" stroke="#484848" stroke-width="1.800"/>
</g>
<!-- fullscreen -->
<rect x="1219.300" y="33.100" width="39.400" height="29.700" rx="3.600" fill="url(#lg1)" stroke="#6c6c6c" stroke-width="2.200"/>
<g fill="#6c6c6c"><path d="M1228.900 36H1249.100L1247.800 37.900H1230.200Z"/><path d="M1222 37L1224.100 38.500V57.300L1222 58.800Z"/><path d="M1256.300 37L1254.200 38.500V57.300L1256.300 58.800Z"/></g>
</g>
<!--LEFTPANEL-->
<g id="left">
<path d="M0 465H92.500a10 10 0 0 1 10 10V1662a10 10 0 0 1-10 10H0Z" fill="#000" opacity=".28" filter="url(#sh2)"/>
<path d="M103.8 898.0H108.3A9.5 9.5 0 0 1 117.8 907.5V1008.4A9.5 9.5 0 0 1 108.3 1017.9H103.8A2.0 2.0 0 0 1 101.8 1015.9V900.0A2.0 2.0 0 0 1 103.8 898.0Z" fill="#e3e3e3"/><path d="M105.0 900.2H108.1A7.5 7.5 0 0 1 115.6 907.7V1008.2A7.5 7.5 0 0 1 108.1 1015.7H105.0A1.0 1.0 0 0 1 104.0 1014.7V901.2A1.0 1.0 0 0 1 105.0 900.2Z" fill="#cbcbcb"/>
<path d="M103.8 1105.0H108.3A9.5 9.5 0 0 1 117.8 1114.5V1215.4A9.5 9.5 0 0 1 108.3 1224.9H103.8A2.0 2.0 0 0 1 101.8 1222.9V1107.0A2.0 2.0 0 0 1 103.8 1105.0Z" fill="#e3e3e3"/><path d="M105.0 1107.2H108.1A7.5 7.5 0 0 1 115.6 1114.7V1215.2A7.5 7.5 0 0 1 108.1 1222.7H105.0A1.0 1.0 0 0 1 104.0 1221.7V1108.2A1.0 1.0 0 0 1 105.0 1107.2Z" fill="#cbcbcb"/>
<path d="M0 465H92.500a9.500 9.500 0 0 1 9.500 9.500V1660.500a9.500 9.500 0 0 1-9.500 9.500H0Z" fill="#dedede"/>
<path d="M0 465H92.500a9.500 9.500 0 0 1 9.500 9.500V567H0Z" fill="#f5f5f5"/>
<rect x="9.200" y="906.700" width="83.900" height="84.300" rx="8" fill="#fff" stroke="#4b99e3" stroke-width="3.900"/>
</g>

<g id="brushes">
<defs>
<linearGradient id="gold" x1="0" y1="0" x2="1" y2="0"><stop offset="0" stop-color="#b8a070"/><stop offset=".15" stop-color="#f3e6bc"/><stop offset=".45" stop-color="#efdca8"/><stop offset=".75" stop-color="#cfae68"/><stop offset="1" stop-color="#8a6c34"/></linearGradient>
<linearGradient id="silv" x1="0" y1="0" x2="1" y2="0"><stop offset="0" stop-color="#6a6a6a"/><stop offset=".3" stop-color="#d8d8d8"/><stop offset=".6" stop-color="#8a8a8a"/><stop offset="1" stop-color="#5a5a5a"/></linearGradient>
<linearGradient id="dark" x1="0" y1="0" x2="1" y2="0"><stop offset="0" stop-color="#4a4a4a"/><stop offset=".45" stop-color="#2e2e2e"/><stop offset=".6" stop-color="#3c444c"/><stop offset=".75" stop-color="#262626"/><stop offset="1" stop-color="#3a3a3a"/></linearGradient>
<linearGradient id="wood" x1="0" y1="0" x2="1" y2="0"><stop offset="0" stop-color="#ecd8cb"/><stop offset=".3" stop-color="#dcbdab"/><stop offset=".65" stop-color="#d0ac98"/><stop offset="1" stop-color="#bd9884"/></linearGradient>
<linearGradient id="chis" x1="0" y1="0" x2="0" y2="1"><stop offset="0" stop-color="#9a9a9a"/><stop offset=".5" stop-color="#c4c4c4"/><stop offset="1" stop-color="#ececec"/></linearGradient>
<linearGradient id="pcone" x1="0" y1="0" x2="1" y2="0"><stop offset="0" stop-color="#6e6e72"/><stop offset=".25" stop-color="#8e8e92"/><stop offset=".5" stop-color="#a2a2a4"/><stop offset=".8" stop-color="#828286"/><stop offset="1" stop-color="#5e5e62"/></linearGradient>
<linearGradient id="nib" x1="0" y1="0" x2="1" y2="0"><stop offset="0" stop-color="#b89a5a"/><stop offset=".2" stop-color="#f6ecc8"/><stop offset=".45" stop-color="#ecd8a0"/><stop offset=".7" stop-color="#d8b870"/><stop offset="1" stop-color="#a88440"/></linearGradient>
<linearGradient id="gbase" x1="0" y1="0" x2="1" y2="0"><stop offset="0" stop-color="#757575"/><stop offset=".5" stop-color="#5c5c5c"/><stop offset=".55" stop-color="#444a50"/><stop offset="1" stop-color="#3e3e3e"/></linearGradient>
<linearGradient id="brn" x1="0" y1="0" x2="1" y2="0"><stop offset="0" stop-color="#3e2414"/><stop offset=".3" stop-color="#8a6238"/><stop offset=".5" stop-color="#5a381e"/><stop offset=".7" stop-color="#7a5230"/><stop offset="1" stop-color="#2e1a0e"/></linearGradient>
<linearGradient id="brnv" x1="0" y1="0" x2="0" y2="1"><stop offset="0" stop-color="#6a4628" stop-opacity=".2"/><stop offset=".6" stop-color="#3a2010" stop-opacity=".2"/><stop offset="1" stop-color="#1e0e06" stop-opacity=".75"/></linearGradient>
<linearGradient id="red" x1="0" y1="0" x2="1" y2="0"><stop offset="0" stop-color="#7a4424"/><stop offset=".4" stop-color="#b07448"/><stop offset=".7" stop-color="#8e5630"/><stop offset="1" stop-color="#5e3218"/></linearGradient>
<linearGradient id="blk" x1="0" y1="0" x2="1" y2="0"><stop offset="0" stop-color="#1a1a1e"/><stop offset=".4" stop-color="#0c0c10"/><stop offset=".55" stop-color="#50545a"/><stop offset=".65" stop-color="#1e2024"/><stop offset="1" stop-color="#101014"/></linearGradient>
<linearGradient id="stump" x1="0" y1="0" x2="1" y2="0"><stop offset="0" stop-color="#e2e0da"/><stop offset=".4" stop-color="#d0cec8"/><stop offset="1" stop-color="#a8a6a2"/></linearGradient>
<linearGradient id="ers" x1="0" y1="0" x2="1" y2="0"><stop offset="0" stop-color="#d8d8d8"/><stop offset=".08" stop-color="#f6f6f6"/><stop offset=".68" stop-color="#ececec"/><stop offset=".8" stop-color="#9aa4ae"/><stop offset=".93" stop-color="#8a949e"/><stop offset="1" stop-color="#c0c4c8"/></linearGradient>
<linearGradient id="ers2" x1="0" y1="0" x2="1" y2="0"><stop offset="0" stop-color="#e8e6e2"/><stop offset=".1" stop-color="#f6f4f2"/><stop offset=".74" stop-color="#eeece8"/><stop offset=".78" stop-color="#ffffff"/><stop offset=".81" stop-color="#8a949e"/><stop offset="1" stop-color="#a6aeb6"/></linearGradient><linearGradient id="ers3" x1="0" y1="0" x2="1" y2="0"><stop offset="0" stop-color="#f2f0ee"/><stop offset=".3" stop-color="#f0f0f0"/><stop offset=".6" stop-color="#c6cace"/><stop offset=".85" stop-color="#8e98a2"/><stop offset="1" stop-color="#a6aeb6"/></linearGradient><linearGradient id="ersv" x1="0" y1="0" x2="0" y2="1"><stop offset="0" stop-color="#fff" stop-opacity=".7"/><stop offset=".3" stop-color="#fff" stop-opacity="0"/><stop offset="1" stop-color="#888" stop-opacity=".15"/></linearGradient>
<linearGradient id="egold" x1="0" y1="0" x2="1" y2="0"><stop offset="0" stop-color="#b09860"/><stop offset=".1" stop-color="#f4e8c0"/><stop offset=".55" stop-color="#ead8a0"/><stop offset=".62" stop-color="#3a4048"/><stop offset=".8" stop-color="#3a4048"/><stop offset=".85" stop-color="#b8923c"/><stop offset="1" stop-color="#8a6a28"/></linearGradient>
<filter id="ish" x="-30%" y="-30%" width="160%" height="160%"><feGaussianBlur stdDeviation="1.300"/></filter>
</defs>
<!-- size icon -->
<g fill="#686868">
<path d="M51 498.100L54.800 504.600H47.500Z"/>
<path d="M46.300 507.300H55.700L61 518.500V522.800H41V518.500Z"/>
<rect x="29" y="533" width="44" height="4" rx="2"/>
<circle cx="43.700" cy="535" r="6"/>
</g>
<!-- pencil -->
<g>
<rect x="38" y="652" width="28" height="6.500" fill="#000" opacity=".35" filter="url(#ish)"/>
<path d="M47.200 606.500L56.600 606.500L66.900 637V640H37V637Z" fill="url(#wood)"/>
<path d="M51.500 595.200L56.800 606.700H47.100Z" fill="#111"/>
<path d="M51.300 596.200L50.300 606.700H47.700Z" fill="#fff"/>
<path d="M51.500 596.500L51.700 606.700H50.800Z" fill="#777"/>
<path d="M37 639C38 634.500 43 633.500 45.500 640.500C48 633 56.500 633 59 640.500C61.500 633.500 66 634.500 66.900 639V656.900H37Z" fill="#222"/>
<path d="M37 639C38 634.500 43 633.500 45.500 640.500V656.900H37Z" fill="#333"/>
<path d="M59 640.500C61.500 633.500 66 634.500 66.900 639V656.900H59Z" fill="#2a2a2a"/>
<rect x="37" y="646.900" width="29.900" height="5.900" fill="#a8873e"/>
<rect x="37" y="646.900" width="8" height="5.900" fill="#eadcb0"/>
<rect x="45" y="646.900" width="14" height="5.900" fill="#b89a50"/>
<rect x="59" y="646.900" width="7.900" height="5.900" fill="#8a6a2c"/>
</g>
<!-- chisel marker -->
<g>
<defs>
<linearGradient id="chis2" x1="0" y1="0" x2="0" y2="1"><stop offset="0" stop-color="#a4a4a4"/><stop offset=".4" stop-color="#dedede"/><stop offset=".75" stop-color="#c2c2c2"/><stop offset="1" stop-color="#6a6a6a"/></linearGradient>
<linearGradient id="cgold" x1="0" y1="0" x2="1" y2="0"><stop offset="0" stop-color="#dccfa8"/><stop offset=".12" stop-color="#f8f0d8"/><stop offset=".55" stop-color="#f5e8c4"/><stop offset="1" stop-color="#f0dcaa"/></linearGradient>
<linearGradient id="cgold2" x1="0" y1="0" x2="1" y2="0"><stop offset="0" stop-color="#dcb868"/><stop offset="1" stop-color="#9c7836"/></linearGradient>
<linearGradient id="ccol" x1="0" y1="0" x2="1" y2="0"><stop offset="0" stop-color="#5c5c5c"/><stop offset=".35" stop-color="#3c3c3c"/><stop offset=".6" stop-color="#2e3436"/><stop offset=".72" stop-color="#2c3640"/><stop offset=".85" stop-color="#303234"/><stop offset="1" stop-color="#3a3a3a"/></linearGradient>
<linearGradient id="csil" x1="0" y1="0" x2="1" y2="0"><stop offset="0" stop-color="#858585"/><stop offset=".3" stop-color="#f0f0f0"/><stop offset=".6" stop-color="#b8b8bc"/><stop offset="1" stop-color="#909090"/></linearGradient>
<linearGradient id="cbase" x1="0" y1="0" x2="1" y2="0"><stop offset="0" stop-color="#8a8a8a"/><stop offset=".04" stop-color="#6a6a6a"/><stop offset=".25" stop-color="#606060"/><stop offset=".5" stop-color="#2e2e30"/><stop offset=".57" stop-color="#3a4248"/><stop offset=".73" stop-color="#3a4248"/><stop offset=".76" stop-color="#18181a"/><stop offset="1" stop-color="#101012"/></linearGradient>
</defs>
<rect x="29" y="760" width="42.500" height="8" fill="#000" opacity=".3" filter="url(#ish)"/>
<path d="M41.100 715.100H47.300L58.900 721V734.800H41.100Z" fill="url(#chis2)"/>
<path d="M42 716H47.100L57.800 721.500V734.800" fill="none" stroke="#4c4c4c" stroke-width="1.900" stroke-linejoin="miter"/>
<path d="M42 715.100V734.800" stroke="#484848" stroke-width="1.800"/>
<!-- upper small bands -->
<path d="M41.100 734.300H58.900L60.600 737.400H39.500Z" fill="#3a3428"/>
<rect x="41.400" y="735.100" width="11.400" height="1.800" fill="#f6eac6"/>
<rect x="55.200" y="735.100" width="3.600" height="1.800" fill="#e8d6a0"/>
<path d="M39.500 737.400H60.600L62.200 740.300H38.400Z" fill="#5e5c50"/>
<rect x="39.200" y="738.700" width="13.600" height="1.600" fill="#dcd8c4"/>
<rect x="56.700" y="738.700" width="4.400" height="1.600" fill="#c8c0a0"/>
<!-- dome -->
<path d="M38.400 740.300H62.200C65.500 742.500 67.800 746 68.600 749.300H31.500C32.300 746 34.500 742.500 38.400 740.300Z" fill="#2e2618"/>
<path d="M39.200 740.900H53.200V748.600H32.800C33.600 745.600 35.800 742.600 39.200 740.900Z" fill="url(#cgold)"/>
<path d="M57 740.900H61.400C64.300 742.800 66.400 745.800 67.300 748.600H59.600Z" fill="url(#cgold2)"/>
<path d="M53.200 738.700H56.300L59.600 748.600H53.600Z" fill="#2a3038"/>
<!-- gold rim -->
<path d="M31.400 749.100H68.700L68.800 750.900H31.300Z" fill="#a08a58"/>
<rect x="33" y="749.300" width="20" height=".9" fill="#d8c690"/>
<!-- collar -->
<path d="M31.600 750.900H68.800V753.200L72.700 757H27.200L31.600 753.200Z" fill="url(#ccol)"/>
<rect x="27.200" y="757" width="45.500" height="2.100" fill="url(#csil)"/>
<rect x="27.200" y="759.100" width="45.500" height="5.700" fill="url(#cbase)"/>
<rect x="28.800" y="759.100" width="43.900" height="1.700" fill="#0c0c10"/>
</g>
<!-- round marker -->
<g>
<defs>
<linearGradient id="rsil" x1="0" y1="0" x2="1" y2="0"><stop offset="0" stop-color="#4a4a4a"/><stop offset=".25" stop-color="#a8a8ac"/><stop offset=".5" stop-color="#6e6e70"/><stop offset=".8" stop-color="#8a8a8c"/><stop offset="1" stop-color="#444"/></linearGradient>
<linearGradient id="rsilv" x1="0" y1="0" x2="0" y2="1"><stop offset="0" stop-color="#fff" stop-opacity=".35"/><stop offset=".5" stop-color="#fff" stop-opacity="0"/><stop offset="1" stop-color="#000" stop-opacity=".45"/></linearGradient>
<linearGradient id="rcream" x1="0" y1="0" x2="1" y2="0"><stop offset="0" stop-color="#efe2c0"/><stop offset=".5" stop-color="#faf2e0"/><stop offset="1" stop-color="#f4e6c6"/></linearGradient>
<linearGradient id="rgold" x1="0" y1="0" x2="1" y2="0"><stop offset="0" stop-color="#ecd9a8"/><stop offset=".5" stop-color="#d8bc7c"/><stop offset="1" stop-color="#a88238"/></linearGradient>
<linearGradient id="rbase" x1="0" y1="0" x2="1" y2="0"><stop offset="0" stop-color="#8a8a8a"/><stop offset=".04" stop-color="#707072"/><stop offset=".3" stop-color="#606062"/><stop offset=".55" stop-color="#38383a"/><stop offset="1" stop-color="#1c1c1e"/></linearGradient>
</defs>
<rect x="29" y="867" width="42.500" height="8" fill="#000" opacity=".3" filter="url(#ish)"/>
<!-- tip -->
<path d="M43 812H56.900L57.900 823H42.100Z" fill="#2e2e2e"/>
<path d="M44.700 812.900H49.200V823H43.900Z" fill="url(#rcream)"/>
<path d="M53 812.900H55.500L56.200 823H53Z" fill="#f0e2b6"/>
<rect x="49.200" y="812.600" width="3.500" height="10.400" fill="#181818"/>
<!-- neck -->
<path d="M41.900 826.700H58.500L60.200 832.900H40.300Z" fill="#262626"/>
<path d="M42.900 826.700H49.200V832.900H41.600Z" fill="url(#rcream)"/>
<path d="M53.100 826.700H57.400L59 832.900H53.100Z" fill="#e8d09a"/>
<rect x="49.200" y="826.700" width="3.600" height="6.200" fill="#181818"/>
<!-- rings -->
<rect x="38.900" y="823" width="21.900" height="3.700" rx=".7" fill="url(#rsil)"/><rect x="38.900" y="823" width="21.900" height="3.700" rx=".7" fill="url(#rsilv)"/>
<rect x="37.200" y="832.900" width="25.400" height="3.700" rx=".7" fill="url(#rsil)"/><rect x="37.200" y="832.900" width="25.400" height="3.700" rx=".7" fill="url(#rsilv)"/>
<!-- dome -->
<path d="M37.800 836.600H62.200C66 840.500 69.500 847 70.800 852.700H29.200C30.500 847 34 840.500 37.800 836.600Z" fill="#262626"/>
<path d="M39.600 837.100H49.200V850.800H33.300C34.300 846.500 36.600 841 39.600 837.100Z" fill="url(#rcream)"/>
<path d="M53.200 837.100H61.800C65 841 68 846.500 69.200 850.800H55.700Z" fill="url(#rgold)"/>
<path d="M49.200 836.600H53L55.600 852.700H49.200Z" fill="#181818"/>
<!-- big ring + base -->
<rect x="27" y="852.700" width="45.700" height="4.600" fill="url(#rsil)"/><rect x="27" y="852.700" width="45.700" height="4.600" fill="url(#rsilv)"/>
<rect x="27" y="857.300" width="45.700" height="15.500" fill="url(#rbase)"/>
<rect x="28.500" y="857.300" width="44.200" height="1.300" fill="#0e0e10"/>
<!-- arch -->
<clipPath id="carch"><rect x="27" y="857.300" width="45.700" height="15.500"/></clipPath>
<g clip-path="url(#carch)">
<ellipse cx="49.900" cy="873" rx="13.200" ry="11.300" fill="#7c7c7e"/>
<ellipse cx="49.900" cy="873" rx="12.200" ry="10.300" fill="#161618"/>
<ellipse cx="50.500" cy="873.500" rx="9.500" ry="7.500" fill="#4a4a4c"/>
<ellipse cx="50.500" cy="874" rx="8.500" ry="5.800" fill="#c4c4c6"/>
<rect x="44.500" y="869.300" width="6" height="2.600" fill="#f4f4f4"/>
<rect x="49.300" y="862" width="2.600" height="11" fill="#2a2a2c"/>
</g>
</g>
<!-- ballpoint (selected) -->
<g>
<defs>
<linearGradient id="bcone" x1="0" y1="0" x2="1" y2="0"><stop offset="0" stop-color="#86868a"/><stop offset=".3" stop-color="#b6b4b8"/><stop offset=".5" stop-color="#8c8c90"/><stop offset=".58" stop-color="#6e6e72"/><stop offset=".8" stop-color="#8c8e94"/><stop offset="1" stop-color="#5a5c60"/></linearGradient>
<linearGradient id="btube" x1="0" y1="0" x2="1" y2="0"><stop offset="0" stop-color="#707074"/><stop offset=".45" stop-color="#fff"/><stop offset="1" stop-color="#808084"/></linearGradient>
<linearGradient id="bgr" x1="0" y1="0" x2="1" y2="0"><stop offset="0" stop-color="#b09858"/><stop offset=".4" stop-color="#f4e4b0"/><stop offset="1" stop-color="#c0a460"/></linearGradient>
<linearGradient id="bband" x1="0" y1="0" x2="1" y2="0"><stop offset="0" stop-color="#f8ecc8"/><stop offset=".26" stop-color="#f4e4b8"/><stop offset=".27" stop-color="#a08a54"/><stop offset=".72" stop-color="#7e6838"/><stop offset=".73" stop-color="#705628"/><stop offset="1" stop-color="#664c20"/></linearGradient>
</defs>
<rect x="38" y="975" width="28" height="8.500" fill="#000" opacity=".22" filter="url(#ish)"/>
<rect x="50.800" y="918.900" width="2.300" height="3.200" rx=".8" fill="#141414"/>
<rect x="49.900" y="921.800" width="4.200" height="5.200" fill="url(#btube)"/>
<rect x="48.900" y="926.800" width="6" height="2" fill="#5a5a50"/>
<rect x="49.100" y="928.700" width="5.600" height="4.400" fill="url(#bgr)"/>
<rect x="46.900" y="933" width="10" height="4" fill="#68685f"/>
<rect x="48.500" y="934" width="2" height="2.500" fill="#b0b0a8" opacity=".7"/>
<path d="M44.300 936.900H59.100Q60.400 936.900 60.600 938.200L66.200 969.200H37.600L42.800 938.200Q43 936.900 44.300 936.900Z" fill="url(#bcone)"/>
<rect x="47" y="940.8" width="14" height="1.100" fill="#5e5e62" opacity=".55"/><rect x="47" y="943.4" width="14" height="1.100" fill="#5e5e62" opacity=".55"/><rect x="47" y="946.0" width="14" height="1.100" fill="#5e5e62" opacity=".55"/><rect x="44.500" y="957.0" width="16.500" height="1.400" fill="#4e4e52" opacity=".7"/><rect x="44.500" y="959.6" width="16.500" height="1.400" fill="#4e4e52" opacity=".7"/><rect x="44.500" y="962.2" width="16.500" height="1.400" fill="#4e4e52" opacity=".7"/><rect x="44.500" y="964.8" width="16.500" height="1.400" fill="#4e4e52" opacity=".7"/>
<rect x="37.200" y="969.200" width="29.400" height="3.800" fill="#737370"/>
<rect x="37.200" y="971.500" width="29.400" height="1.400" fill="#c8c6ba"/>
<rect x="36.700" y="972.900" width="30.200" height="5.900" fill="url(#bband)"/>
<rect x="37.200" y="978.800" width="29.400" height="1.900" fill="#9a9a92"/>
<rect x="58.400" y="978.800" width="8.200" height="1.900" fill="#c4c2b6"/>
</g>
<!-- fountain pen -->
<g>
<defs>
<linearGradient id="fnib" x1="0" y1="0" x2="1" y2="0"><stop offset="0" stop-color="#b49458"/><stop offset=".1" stop-color="#e0cca0"/><stop offset=".25" stop-color="#fdf8ec"/><stop offset=".5" stop-color="#ecd8a6"/><stop offset=".75" stop-color="#d8b878"/><stop offset="1" stop-color="#a47c3c"/></linearGradient>
<linearGradient id="fbase" x1="0" y1="0" x2="1" y2="0"><stop offset="0" stop-color="#868686"/><stop offset=".52" stop-color="#646464"/><stop offset=".54" stop-color="#2e3438"/><stop offset="1" stop-color="#3e3e40"/></linearGradient>
</defs>
<rect x="42" y="1084" width="20" height="7.500" fill="#000" opacity=".22" filter="url(#ish)"/>
<path d="M52.400 1025.200C53.400 1025.200 54 1026.300 54.300 1027.500C55.300 1030.500 56.500 1033 57.400 1035.100C58.500 1037.700 59.500 1040.500 60 1042.800C60.600 1044.500 61.200 1046.200 61.200 1047.700C61.200 1050.500 60.600 1053.500 60.200 1056.100C59.800 1058.800 59.400 1061.500 59.100 1063.700L58.500 1068.900H44.800L44 1063.700C43.700 1061.500 43.300 1058.800 42.900 1056.100C42.500 1053.500 42.100 1051 42.100 1048.500C42.100 1046.500 43.200 1044.500 44 1042.800C45 1040.500 46.800 1037.700 47.900 1035.100C48.800 1033 49.700 1030.500 50.500 1027.500C50.800 1026.300 51.400 1025.200 52.400 1025.200Z" fill="url(#fnib)"/>
<path d="M52.400 1026.200V1057.200" stroke="#4a3a18" stroke-width="1.150"/>
<circle cx="52.400" cy="1058.400" r="1.450" fill="#55441c"/>
<path d="M44.800 1068.700H58.700C59.200 1071 61.300 1072.500 62.700 1074.600H41C42.300 1072.500 44.300 1071 44.800 1068.700Z" fill="url(#fnib)"/>
<path d="M44.800 1068.700H46.400L46.200 1070.200L45 1070.500Z" fill="#222"/>
<path d="M47.500 1069.500H58.300" stroke="#6a5a30" stroke-width="1"/>
<rect x="53.400" y="1070.600" width="2.100" height="4" fill="#141414"/>
<path d="M41 1074.600L42.800 1073L41.200 1073.600Z" fill="#111"/>
<rect x="40.800" y="1074.400" width="22.100" height="15.200" rx="1" fill="url(#fbase)"/>
<rect x="40.800" y="1074.800" width="22.100" height="1.700" fill="#c2c2c4"/>
</g>
<!-- round brush -->
<g>
<defs>
<linearGradient id="rbh" x1="0" y1="0" x2="1" y2="0"><stop offset="0" stop-color="#3a2416"/><stop offset=".18" stop-color="#6e4e32"/><stop offset=".3" stop-color="#a88a60"/><stop offset=".4" stop-color="#6a4a2e"/><stop offset=".5" stop-color="#8a6a46"/><stop offset=".6" stop-color="#5a3c24"/><stop offset=".72" stop-color="#7a5a3a"/><stop offset=".85" stop-color="#4a2e1c"/><stop offset="1" stop-color="#2e1a10"/></linearGradient>
<linearGradient id="rbv" x1="0" y1="0" x2="0" y2="1"><stop offset="0" stop-color="#3a2416" stop-opacity=".55"/><stop offset=".25" stop-color="#3a2416" stop-opacity="0"/><stop offset=".5" stop-color="#2a1810" stop-opacity=".25"/><stop offset=".8" stop-color="#24140e" stop-opacity=".85"/><stop offset="1" stop-color="#1e100a" stop-opacity=".95"/></linearGradient>
<linearGradient id="rfer" x1="0" y1="0" x2="1" y2="0"><stop offset="0" stop-color="#f0e4c0"/><stop offset=".3" stop-color="#fbf0d4"/><stop offset=".6" stop-color="#f0dca4"/><stop offset="1" stop-color="#c8a860"/></linearGradient>
<linearGradient id="rbb" x1="0" y1="0" x2="1" y2="0"><stop offset="0" stop-color="#8a8a8a"/><stop offset=".06" stop-color="#626464"/><stop offset=".4" stop-color="#585a5a"/><stop offset=".5" stop-color="#303234"/><stop offset=".7" stop-color="#383c40"/><stop offset="1" stop-color="#1e1e20"/></linearGradient>
</defs>
<rect x="40" y="1191.500" width="22.500" height="7.500" fill="#000" opacity=".26" filter="url(#ish)"/>
<path d="M50.900 1143.100C55 1148 59.700 1156 59.700 1164C59.700 1169 58.700 1173 58.200 1176.800H44C43.300 1173 42.100 1169 42.100 1164C42.100 1156 47 1148 50.900 1143.100Z" fill="url(#rbh)"/>
<path d="M50.900 1143.100C55 1148 59.700 1156 59.700 1164C59.700 1169 58.700 1173 58.200 1176.800H44C43.300 1173 42.100 1169 42.100 1164C42.100 1156 47 1148 50.900 1143.100Z" fill="url(#rbv)"/>
<path d="M45.800 1176.700H56.100Q57.400 1176.700 57.800 1178L61.500 1189.100H40L44.100 1178Q44.500 1176.700 45.800 1176.700Z" fill="#4e5458"/>
<path d="M45.500 1176.700H56.300Q57.300 1176.700 57.400 1177.800L59 1189.100H44.200L44.400 1177.800Q44.500 1176.700 45.500 1176.700Z" fill="url(#rfer)"/>
<rect x="52" y="1179" width="2.900" height="10.100" fill="#1a2024"/>
<rect x="39" y="1189.100" width="24" height="2.300" fill="url(#csil)"/>
<rect x="39" y="1191.200" width="24" height="5.600" fill="url(#rbb)"/>
<rect x="41" y="1191.400" width="22" height="1.400" fill="#0e0e10"/>
</g>
<!-- pointed brush -->
<g>
<defs>
<linearGradient id="pbh" x1="0" y1="0" x2="1" y2="0"><stop offset="0" stop-color="#6a4028"/><stop offset=".35" stop-color="#93654a"/><stop offset=".55" stop-color="#8a5a3a"/><stop offset=".8" stop-color="#7a4a2a"/><stop offset="1" stop-color="#5e361e"/></linearGradient>
<linearGradient id="pbv" x1="0" y1="0" x2="0" y2="1"><stop offset="0" stop-color="#3e2418" stop-opacity=".8"/><stop offset=".3" stop-color="#3e2418" stop-opacity=".15"/><stop offset=".7" stop-color="#3e2418" stop-opacity="0"/><stop offset="1" stop-color="#5a3018" stop-opacity=".3"/></linearGradient>
<linearGradient id="pblk" x1="0" y1="0" x2="1" y2="0"><stop offset="0" stop-color="#1a1c20"/><stop offset=".2" stop-color="#0a0a0e"/><stop offset=".5" stop-color="#0e1014"/><stop offset=".55" stop-color="#40444a"/><stop offset=".66" stop-color="#363a40"/><stop offset=".7" stop-color="#101216"/><stop offset="1" stop-color="#181a1e"/></linearGradient>
<linearGradient id="pgold" x1="0" y1="0" x2="1" y2="0"><stop offset="0" stop-color="#ecd8a8"/><stop offset=".3" stop-color="#f4e4b8"/><stop offset=".52" stop-color="#e0c080"/><stop offset=".66" stop-color="#d4ae64"/><stop offset="1" stop-color="#966c2c"/></linearGradient>
</defs>
<rect x="40" y="1299" width="24" height="8" fill="#000" opacity=".28" filter="url(#ish)"/>
<path d="M52.300 1239.200C53 1242 53.600 1245 54.100 1247.600C55 1250.500 56.200 1253 57 1255.400C58 1258 59 1260.500 59 1263.300C59.300 1265.500 59.500 1267.500 59.400 1269.100L58.600 1271.500H47.300L46.300 1269.100C45.900 1267.500 45.800 1265.500 45.900 1263.300C46 1260.500 46.500 1258 47.300 1255.400C48 1253 49.200 1250.500 50 1247.600C50.800 1245 51.600 1242 52.300 1239.200Z" fill="url(#pbh)"/>
<path d="M52.300 1239.200C53 1242 53.600 1245 54.100 1247.600C55 1250.500 56.200 1253 57 1255.400C58 1258 59 1260.500 59 1263.300C59.300 1265.500 59.500 1267.500 59.400 1269.100L58.600 1271.500H47.300L46.300 1269.100C45.900 1267.500 45.800 1265.500 45.900 1263.300C46 1260.500 46.500 1258 47.300 1255.400C48 1253 49.200 1250.500 50 1247.600C50.800 1245 51.600 1242 52.300 1239.200Z" fill="url(#pbv)"/>
<path d="M45.600 1270.900H58.400Q59.800 1270.900 60.200 1272.200L63.100 1280.900H41L43.800 1272.200Q44.200 1270.900 45.600 1270.900Z" fill="#0c0c10"/>
<ellipse cx="52.600" cy="1271.700" rx="6.300" ry=".9" fill="#8e7e7e"/>
<path d="M53.200 1273H55.700L56 1280.900H53.100Z" fill="#ececf0"/>
<path d="M39.100 1282.300Q39.100 1280.800 40.600 1280.800H63.300Q64.800 1280.800 64.800 1282.300V1304.900H39.100Z" fill="url(#pblk)"/>
<rect x="40" y="1281" width="24" height=".7" fill="#50545a"/>
<rect x="39.100" y="1294.900" width="25.700" height="6" fill="url(#pgold)"/>
<rect x="39.100" y="1294.900" width="25.700" height=".9" fill="#f8ecc8" opacity=".7"/>
<rect x="39.100" y="1300" width="25.700" height=".9" fill="#a8843c" opacity=".8"/>
</g>
<!-- stump -->
<g>
<defs>
<linearGradient id="stp" x1="0" y1="0" x2="1" y2="0"><stop offset="0" stop-color="#a4a4a0"/><stop offset=".2" stop-color="#d6d6d0"/><stop offset=".5" stop-color="#cacac4"/><stop offset=".8" stop-color="#b0b0aa"/><stop offset="1" stop-color="#8e8e8a"/></linearGradient>
</defs>
<rect x="40" y="1407.500" width="22.500" height="8" fill="#000" opacity=".22" filter="url(#ish)"/>
<path d="M51 1357.900C52 1357.900 53 1360 54 1362.500C58 1372 62.600 1385 62.600 1395.900H39.300C39.300 1385 44 1372 48 1362.500C49 1360 50 1357.900 51 1357.900Z" fill="url(#stp)"/>
<path d="M49.4 1362.0L53.0 1360.6M48.6 1364.2L53.8 1362.8M47.8 1366.3L54.6 1364.9M47.1 1368.5L55.3 1367.1M46.4 1370.6L56.0 1369.2M45.8 1372.8L56.6 1371.4M45.1 1374.9L57.3 1373.5M44.5 1377.1L57.9 1375.7M43.9 1379.2L58.5 1377.8M43.4 1381.4L59.0 1380.0M42.8 1383.5L59.6 1382.1M42.3 1385.7L60.1 1384.3" stroke="#90908c" stroke-width="1" fill="none" opacity=".85"/>
<path d="M40.200 1389.500C45 1387.500 55 1388.500 62 1388L62.600 1395.900H39.300Z" fill="#d8d6ce" opacity=".9"/>
<path d="M40 1392.500C46 1391 54 1391.800 62.300 1390.500" stroke="#b4b2aa" stroke-width=".7" fill="none"/>
<rect x="39.200" y="1395.700" width="23.500" height="2.500" fill="#c49a50"/>
<rect x="42" y="1395.700" width="9" height="2.500" fill="#f0e0c0"/>
<rect x="39.200" y="1395.700" width="2.800" height="2.600" fill="#101010"/>
<rect x="51.200" y="1395.700" width="2.800" height="2.200" fill="#181810"/>
<rect x="39.200" y="1398.200" width="23.500" height="2.700" fill="url(#csil)"/>
<rect x="39" y="1400.800" width="23.800" height="12.900" rx=".8" fill="url(#fbase)"/>
</g>
<!-- eraser 1 -->
<g id="ebody">
<rect x="30.500" y="1513" width="41.500" height="9.500" fill="#000" opacity=".26" filter="url(#ish)"/>
<rect x="31" y="1491" width="40" height="4.200" fill="#1e1e1e"/>
<rect x="32.200" y="1491.300" width="23.400" height="3.700" fill="#f0dca8"/>
<rect x="32.200" y="1491.300" width="23.400" height="1.200" fill="#d8c490" opacity=".7"/>
<path d="M56 1491.300H60.500L62.800 1495H56Z" fill="#2a3036"/>
<path d="M61.500 1491.300H68.900V1495H63.800Z" fill="#b48c3a"/>
<rect x="29" y="1495.100" width="43.800" height="25.600" fill="#38383c"/>
<rect x="29" y="1495.100" width="43.800" height="1.800" fill="url(#csil)"/>
<rect x="29" y="1495.100" width="1.800" height="25.600" fill="#8c8c8c"/>
<rect x="60.300" y="1497" width="12.500" height="23.700" fill="#26231f"/>
<rect x="61.100" y="1501.1" width="11.100" height="1.700" rx=".6" fill="#9a8c6a"/><rect x="61.100" y="1505.2" width="11.100" height="1.700" rx=".6" fill="#9a8c6a"/><rect x="61.100" y="1509.2" width="11.100" height="1.700" rx=".6" fill="#9a8c6a"/><rect x="61.100" y="1513.4" width="11.100" height="1.700" rx=".6" fill="#9a8c6a"/><rect x="61.100" y="1517.2" width="11.100" height="1.700" rx=".6" fill="#9a8c6a"/>
<rect x="34.900" y="1502" width="6" height="18.700" fill="#6e6e6e"/>
<rect x="49.300" y="1502" width="5.900" height="18.700" fill="#2c2e32"/>
<path d="M34.900 1498.800H55.200V1502.700L49.350 1505.500V1508.600L55.200 1510.100V1512.900L49.350 1515.200V1520.700H40.750V1515.200L34.900 1512.900V1510.100L40.750 1508.600V1505.500L34.900 1502.700Z" fill="#f0efec"/>
<rect x="34.900" y="1498.800" width="20.300" height="1.200" fill="#d0d0d0" opacity=".6"/>
</g>
<path d="M33.100 1476.600a3.600 3.600 0 0 1 3.600-3.600H65.300a3.600 3.600 0 0 1 3.600 3.600V1491H33.100Z" fill="#9a9a94"/>
<path d="M34.600 1477.400a2.600 2.600 0 0 1 2.600-2.600H64.700a2.600 2.600 0 0 1 2.600 2.600V1491H34.600Z" fill="url(#ers2)"/>
<path d="M34.600 1477.400a2.600 2.600 0 0 1 2.600-2.600H64.700a2.600 2.600 0 0 1 2.600 2.600V1491H34.600Z" fill="url(#ersv)"/>
<!-- eraser 2 -->
<use href="#ebody" transform="translate(0 107.600)"/>
<path d="M33.100 1598.600V1589.800C33.100 1588.200 34 1587.100 35.500 1586.600L65.200 1575.200C67.200 1574.500 68.900 1575.900 68.900 1578V1598.600Z" fill="#9a9a94"/>
<path d="M34.600 1598.600V1590.300C34.600 1589.100 35.300 1588.300 36.300 1588L65 1577C66.300 1576.500 67.300 1577.400 67.300 1578.800V1598.600Z" fill="url(#ers3)"/>
</g>
<!--RIGHTPANEL-->
<g id="right">
<path d="M1536 465H1366a11 11 0 0 0-11 11V1662a11 11 0 0 0 11 11H1536Z" fill="#000" opacity=".3" filter="url(#sh2)"/>
<path d="M1536 465H1366a10 10 0 0 0-10 10V1661a10 10 0 0 0 10 10H1536Z" fill="#dedede"/>
<path d="M1536 465H1366a10 10 0 0 0-10 10V569H1536Z" fill="#f8f8f8"/>
<path d="M1536 1539H1356V1661a10 10 0 0 0 10 10H1536Z" fill="#f8f8f8"/>
<rect x="1362" y="1257" width="168" height="165.700" rx="5" fill="#fff" stroke="#4ba8ec" stroke-width="4"/>
</g>

<g id="rcontent">
<defs>
<linearGradient id="l2g" x1="0" y1="0" x2="0" y2="1"><stop offset="0" stop-color="#fefefe"/><stop offset=".78" stop-color="#fdfdfd"/><stop offset="1" stop-color="#efefef"/></linearGradient>
<linearGradient id="hdsh" x1="0" y1="0" x2="0" y2="1"><stop offset="0" stop-color="#c9c9c9"/><stop offset=".35" stop-color="#d2d2d2"/><stop offset="1" stop-color="#dedede"/></linearGradient>
<clipPath id="cthumb"><rect x="1364" y="1259" width="164" height="161.700" rx="2"/></clipPath>
<g id="eye"><path d="M-15.200 0C-10 -6.800 -5 -10.200 0 -10.200C5 -10.200 10 -6.800 15.200 0C10 6.800 5 10.200 0 10.200C-5 10.200 -10 6.800 -15.200 0Z" fill="#8e8e8e"/><circle r="8.200" fill="#fff"/><circle r="4" fill="#8e8e8e"/></g>
</defs>
<rect x="1356" y="569" width="180" height="22" fill="url(#hdsh)"/>
<rect x="1356" y="1534" width="180" height="5" fill="#cfcfcf"/>
<!-- plus -->
<path d="M1445.900 501.200V532.900M1430.200 517.050H1461.700" stroke="#7c7c7c" stroke-width="4" stroke-linecap="round" fill="none"/>
<!-- layer 2 -->
<rect x="1360" y="1432" width="172" height="102" rx="5" fill="url(#l2g)"/>
<circle cx="1485.700" cy="1483.700" r="39.300" fill="none" stroke="#e0e0e0" stroke-width="1.800"/>
<use href="#eye" transform="translate(1388.800 1456.900)"/>
<!-- layer 1 thumb -->
<g clip-path="url(#cthumb)" opacity=".34"><use href="#sk" transform="translate(1378.500 1257) scale(.165) rotate(.603) translate(-187.300 -646.800)" style="--lw:2.600px;--dw:4.500px"/></g>
<g stroke-linecap="round" fill="none"><path d="M1436.900 1302.300L1438.200 1308.100M1451.200 1297.100L1452.800 1302.900" stroke="#6a6a8c" stroke-width="1.100"/><path d="M1450.600 1302.900L1455.800 1313.300M1448 1308.100L1461 1302.900M1452 1318L1457 1309" stroke="#9a9ab4" stroke-width=".8"/></g>
<use href="#eye" transform="translate(1389 1281)"/>
<!-- lock -->
<g fill="#8e8e8e">
<path d="M1382 1393.500V1388.750A6 6 0 0 1 1394 1388.750V1389" fill="none" stroke="#8e8e8e" stroke-width="3.900"/>
<rect x="1378.100" y="1393.100" width="19.800" height="15.800"/>
</g>
<g fill="#fff">
<rect x="1384.100" y="1394.900" width="3.900" height="3.900"/><rect x="1391.900" y="1394.900" width="4.200" height="3.900"/>
<rect x="1380" y="1398.800" width="4.100" height="4.200"/><rect x="1388" y="1398.800" width="3.900" height="4.200"/>
<rect x="1384.100" y="1403" width="3.900" height="3.900"/><rect x="1391.900" y="1403" width="4.200" height="3.900"/>
</g>
<!-- color wheel -->
<g><path d="M1467.90 1605.00A21.9 21.9 0 0 1 1467.81 1606.96L1459.94 1606.26A14.0 14.0 0 0 0 1460.00 1605.00Z" fill="hsl(357,100%,50%)"/><path d="M1467.85 1606.53A21.9 21.9 0 0 1 1467.62 1608.48L1459.82 1607.23A14.0 14.0 0 0 0 1459.97 1605.98Z" fill="hsl(352,100%,50%)"/><path d="M1467.69 1608.05A21.9 21.9 0 0 1 1467.33 1609.98L1459.63 1608.18A14.0 14.0 0 0 0 1459.86 1606.95Z" fill="hsl(347,100%,50%)"/><path d="M1467.42 1609.55A21.9 21.9 0 0 1 1466.93 1611.46L1459.38 1609.13A14.0 14.0 0 0 0 1459.69 1607.91Z" fill="hsl(341,100%,50%)"/><path d="M1467.05 1611.04A21.9 21.9 0 0 1 1466.43 1612.90L1459.06 1610.05A14.0 14.0 0 0 0 1459.46 1608.86Z" fill="hsl(336,100%,50%)"/><path d="M1466.58 1612.49A21.9 21.9 0 0 1 1465.82 1614.31L1458.67 1610.95A14.0 14.0 0 0 0 1459.16 1609.79Z" fill="hsl(331,100%,50%)"/><path d="M1466.01 1613.91A21.9 21.9 0 0 1 1465.13 1615.67L1458.23 1611.82A14.0 14.0 0 0 0 1458.79 1610.69Z" fill="hsl(325,100%,50%)"/><path d="M1465.34 1615.28A21.9 21.9 0 0 1 1464.34 1616.97L1457.72 1612.65A14.0 14.0 0 0 0 1458.36 1611.57Z" fill="hsl(320,100%,50%)"/><path d="M1464.57 1616.61A21.9 21.9 0 0 1 1463.46 1618.22L1457.16 1613.45A14.0 14.0 0 0 0 1457.87 1612.42Z" fill="hsl(315,100%,50%)"/><path d="M1463.72 1617.87A21.9 21.9 0 0 1 1462.49 1619.41L1456.54 1614.21A14.0 14.0 0 0 0 1457.33 1613.23Z" fill="hsl(309,100%,50%)"/><path d="M1462.78 1619.08A21.9 21.9 0 0 1 1461.45 1620.53L1455.87 1614.92A14.0 14.0 0 0 0 1456.72 1614.00Z" fill="hsl(304,100%,50%)"/><path d="M1461.75 1620.21A21.9 21.9 0 0 1 1460.33 1621.56L1455.16 1615.59A14.0 14.0 0 0 0 1456.07 1614.73Z" fill="hsl(299,100%,50%)"/><path d="M1460.65 1621.27A21.9 21.9 0 0 1 1459.14 1622.52L1454.40 1616.20A14.0 14.0 0 0 0 1455.37 1615.40Z" fill="hsl(293,100%,50%)"/><path d="M1459.48 1622.26A21.9 21.9 0 0 1 1457.88 1623.40L1453.60 1616.76A14.0 14.0 0 0 0 1454.62 1616.03Z" fill="hsl(288,100%,50%)"/><path d="M1458.25 1623.16A21.9 21.9 0 0 1 1456.57 1624.18L1452.76 1617.26A14.0 14.0 0 0 0 1453.83 1616.61Z" fill="hsl(283,100%,50%)"/><path d="M1456.95 1623.97A21.9 21.9 0 0 1 1455.20 1624.87L1451.88 1617.70A14.0 14.0 0 0 0 1453.00 1617.12Z" fill="hsl(277,100%,50%)"/><path d="M1455.60 1624.68A21.9 21.9 0 0 1 1453.80 1625.47L1450.98 1618.08A14.0 14.0 0 0 0 1452.14 1617.58Z" fill="hsl(272,100%,50%)"/><path d="M1454.20 1625.31A21.9 21.9 0 0 1 1452.35 1625.96L1450.06 1618.40A14.0 14.0 0 0 0 1451.24 1617.98Z" fill="hsl(267,100%,50%)"/><path d="M1452.77 1625.83A21.9 21.9 0 0 1 1450.87 1626.35L1449.11 1618.65A14.0 14.0 0 0 0 1450.33 1618.31Z" fill="hsl(261,100%,50%)"/><path d="M1451.30 1626.25A21.9 21.9 0 0 1 1449.37 1626.64L1448.15 1618.83A14.0 14.0 0 0 0 1449.39 1618.58Z" fill="hsl(256,100%,50%)"/><path d="M1449.80 1626.57A21.9 21.9 0 0 1 1447.85 1626.82L1447.18 1618.95A14.0 14.0 0 0 0 1448.43 1618.79Z" fill="hsl(251,100%,50%)"/><path d="M1448.29 1626.78A21.9 21.9 0 0 1 1446.33 1626.90L1446.21 1619.00A14.0 14.0 0 0 0 1447.46 1618.92Z" fill="hsl(245,100%,50%)"/><path d="M1446.76 1626.89A21.9 21.9 0 0 1 1444.80 1626.87L1445.23 1618.98A14.0 14.0 0 0 0 1446.49 1618.99Z" fill="hsl(240,100%,50%)"/><path d="M1445.24 1626.89A21.9 21.9 0 0 1 1443.28 1626.73L1444.26 1618.89A14.0 14.0 0 0 0 1445.51 1618.99Z" fill="hsl(236,100%,50%)"/><path d="M1443.71 1626.78A21.9 21.9 0 0 1 1441.77 1626.49L1443.29 1618.74A14.0 14.0 0 0 0 1444.54 1618.92Z" fill="hsl(232,100%,50%)"/><path d="M1442.20 1626.57A21.9 21.9 0 0 1 1440.28 1626.14L1442.34 1618.51A14.0 14.0 0 0 0 1443.57 1618.79Z" fill="hsl(228,100%,50%)"/><path d="M1440.70 1626.25A21.9 21.9 0 0 1 1438.82 1625.69L1441.41 1618.23A14.0 14.0 0 0 0 1442.61 1618.58Z" fill="hsl(224,100%,50%)"/><path d="M1439.23 1625.83A21.9 21.9 0 0 1 1437.39 1625.14L1440.50 1617.87A14.0 14.0 0 0 0 1441.67 1618.31Z" fill="hsl(220,100%,50%)"/><path d="M1437.80 1625.31A21.9 21.9 0 0 1 1436.01 1624.49L1439.61 1617.46A14.0 14.0 0 0 0 1440.76 1617.98Z" fill="hsl(216,100%,50%)"/><path d="M1436.40 1624.68A21.9 21.9 0 0 1 1434.67 1623.74L1438.76 1616.98A14.0 14.0 0 0 0 1439.86 1617.58Z" fill="hsl(212,100%,50%)"/><path d="M1435.05 1623.97A21.9 21.9 0 0 1 1433.39 1622.91L1437.94 1616.45A14.0 14.0 0 0 0 1439.00 1617.12Z" fill="hsl(207,100%,50%)"/><path d="M1433.75 1623.16A21.9 21.9 0 0 1 1432.17 1621.98L1437.16 1615.86A14.0 14.0 0 0 0 1438.17 1616.61Z" fill="hsl(203,100%,50%)"/><path d="M1432.52 1622.26A21.9 21.9 0 0 1 1431.02 1620.98L1436.43 1615.21A14.0 14.0 0 0 0 1437.38 1616.03Z" fill="hsl(199,100%,50%)"/><path d="M1431.35 1621.27A21.9 21.9 0 0 1 1429.95 1619.89L1435.74 1614.52A14.0 14.0 0 0 0 1436.63 1615.40Z" fill="hsl(195,100%,50%)"/><path d="M1430.25 1620.21A21.9 21.9 0 0 1 1428.95 1618.74L1435.10 1613.78A14.0 14.0 0 0 0 1435.93 1614.73Z" fill="hsl(191,100%,50%)"/><path d="M1429.22 1619.08A21.9 21.9 0 0 1 1428.03 1617.52L1434.51 1613.00A14.0 14.0 0 0 0 1435.28 1614.00Z" fill="hsl(187,100%,50%)"/><path d="M1428.28 1617.87A21.9 21.9 0 0 1 1427.20 1616.23L1433.98 1612.18A14.0 14.0 0 0 0 1434.67 1613.23Z" fill="hsl(183,100%,50%)"/><path d="M1427.43 1616.61A21.9 21.9 0 0 1 1426.46 1614.89L1433.51 1611.32A14.0 14.0 0 0 0 1434.13 1612.42Z" fill="hsl(178,100%,50%)"/><path d="M1426.66 1615.28A21.9 21.9 0 0 1 1425.82 1613.51L1433.10 1610.44A14.0 14.0 0 0 0 1433.64 1611.57Z" fill="hsl(170,100%,50%)"/><path d="M1425.99 1613.91A21.9 21.9 0 0 1 1425.28 1612.08L1432.75 1609.52A14.0 14.0 0 0 0 1433.21 1610.69Z" fill="hsl(163,100%,50%)"/><path d="M1425.42 1612.49A21.9 21.9 0 0 1 1424.83 1610.61L1432.47 1608.59A14.0 14.0 0 0 0 1432.84 1609.79Z" fill="hsl(155,100%,50%)"/><path d="M1424.95 1611.04A21.9 21.9 0 0 1 1424.49 1609.12L1432.25 1607.64A14.0 14.0 0 0 0 1432.54 1608.86Z" fill="hsl(147,100%,50%)"/><path d="M1424.58 1609.55A21.9 21.9 0 0 1 1424.26 1607.61L1432.10 1606.67A14.0 14.0 0 0 0 1432.31 1607.91Z" fill="hsl(139,100%,50%)"/><path d="M1424.31 1608.05A21.9 21.9 0 0 1 1424.13 1606.09L1432.02 1605.70A14.0 14.0 0 0 0 1432.14 1606.95Z" fill="hsl(132,100%,50%)"/><path d="M1424.15 1606.53A21.9 21.9 0 0 1 1424.10 1604.56L1432.00 1604.72A14.0 14.0 0 0 0 1432.03 1605.98Z" fill="hsl(124,100%,50%)"/><path d="M1424.10 1605.00A21.9 21.9 0 0 1 1424.19 1603.04L1432.06 1603.74A14.0 14.0 0 0 0 1432.00 1605.00Z" fill="hsl(118,100%,50%)"/><path d="M1424.15 1603.47A21.9 21.9 0 0 1 1424.38 1601.52L1432.18 1602.77A14.0 14.0 0 0 0 1432.03 1604.02Z" fill="hsl(114,100%,50%)"/><path d="M1424.31 1601.95A21.9 21.9 0 0 1 1424.67 1600.02L1432.37 1601.82A14.0 14.0 0 0 0 1432.14 1603.05Z" fill="hsl(109,100%,50%)"/><path d="M1424.58 1600.45A21.9 21.9 0 0 1 1425.07 1598.54L1432.62 1600.87A14.0 14.0 0 0 0 1432.31 1602.09Z" fill="hsl(105,100%,50%)"/><path d="M1424.95 1598.96A21.9 21.9 0 0 1 1425.57 1597.10L1432.94 1599.95A14.0 14.0 0 0 0 1432.54 1601.14Z" fill="hsl(101,100%,50%)"/><path d="M1425.42 1597.51A21.9 21.9 0 0 1 1426.18 1595.69L1433.33 1599.05A14.0 14.0 0 0 0 1432.84 1600.21Z" fill="hsl(96,100%,50%)"/><path d="M1425.99 1596.09A21.9 21.9 0 0 1 1426.87 1594.33L1433.77 1598.18A14.0 14.0 0 0 0 1433.21 1599.31Z" fill="hsl(92,100%,50%)"/><path d="M1426.66 1594.72A21.9 21.9 0 0 1 1427.66 1593.03L1434.28 1597.35A14.0 14.0 0 0 0 1433.64 1598.43Z" fill="hsl(88,100%,50%)"/><path d="M1427.43 1593.39A21.9 21.9 0 0 1 1428.54 1591.78L1434.84 1596.55A14.0 14.0 0 0 0 1434.13 1597.58Z" fill="hsl(84,100%,50%)"/><path d="M1428.28 1592.13A21.9 21.9 0 0 1 1429.51 1590.59L1435.46 1595.79A14.0 14.0 0 0 0 1434.67 1596.77Z" fill="hsl(79,100%,50%)"/><path d="M1429.22 1590.92A21.9 21.9 0 0 1 1430.55 1589.47L1436.13 1595.08A14.0 14.0 0 0 0 1435.28 1596.00Z" fill="hsl(75,100%,50%)"/><path d="M1430.25 1589.79A21.9 21.9 0 0 1 1431.67 1588.44L1436.84 1594.41A14.0 14.0 0 0 0 1435.93 1595.27Z" fill="hsl(71,100%,50%)"/><path d="M1431.35 1588.73A21.9 21.9 0 0 1 1432.86 1587.48L1437.60 1593.80A14.0 14.0 0 0 0 1436.63 1594.60Z" fill="hsl(66,100%,50%)"/><path d="M1432.52 1587.74A21.9 21.9 0 0 1 1434.12 1586.60L1438.40 1593.24A14.0 14.0 0 0 0 1437.38 1593.97Z" fill="hsl(62,100%,50%)"/><path d="M1433.75 1586.84A21.9 21.9 0 0 1 1435.43 1585.82L1439.24 1592.74A14.0 14.0 0 0 0 1438.17 1593.39Z" fill="hsl(59,100%,50%)"/><path d="M1435.05 1586.03A21.9 21.9 0 0 1 1436.80 1585.13L1440.12 1592.30A14.0 14.0 0 0 0 1439.00 1592.88Z" fill="hsl(57,100%,50%)"/><path d="M1436.40 1585.32A21.9 21.9 0 0 1 1438.20 1584.53L1441.02 1591.92A14.0 14.0 0 0 0 1439.86 1592.42Z" fill="hsl(55,100%,50%)"/><path d="M1437.80 1584.69A21.9 21.9 0 0 1 1439.65 1584.04L1441.94 1591.60A14.0 14.0 0 0 0 1440.76 1592.02Z" fill="hsl(53,100%,50%)"/><path d="M1439.23 1584.17A21.9 21.9 0 0 1 1441.13 1583.65L1442.89 1591.35A14.0 14.0 0 0 0 1441.67 1591.69Z" fill="hsl(51,100%,50%)"/><path d="M1440.70 1583.75A21.9 21.9 0 0 1 1442.63 1583.36L1443.85 1591.17A14.0 14.0 0 0 0 1442.61 1591.42Z" fill="hsl(49,100%,50%)"/><path d="M1442.20 1583.43A21.9 21.9 0 0 1 1444.15 1583.18L1444.82 1591.05A14.0 14.0 0 0 0 1443.57 1591.21Z" fill="hsl(47,100%,50%)"/><path d="M1443.71 1583.22A21.9 21.9 0 0 1 1445.67 1583.10L1445.79 1591.00A14.0 14.0 0 0 0 1444.54 1591.08Z" fill="hsl(45,100%,50%)"/><path d="M1445.24 1583.11A21.9 21.9 0 0 1 1447.20 1583.13L1446.77 1591.02A14.0 14.0 0 0 0 1445.51 1591.01Z" fill="hsl(44,100%,50%)"/><path d="M1446.76 1583.11A21.9 21.9 0 0 1 1448.72 1583.27L1447.74 1591.11A14.0 14.0 0 0 0 1446.49 1591.01Z" fill="hsl(42,100%,50%)"/><path d="M1448.29 1583.22A21.9 21.9 0 0 1 1450.23 1583.51L1448.71 1591.26A14.0 14.0 0 0 0 1447.46 1591.08Z" fill="hsl(40,100%,50%)"/><path d="M1449.80 1583.43A21.9 21.9 0 0 1 1451.72 1583.86L1449.66 1591.49A14.0 14.0 0 0 0 1448.43 1591.21Z" fill="hsl(38,100%,50%)"/><path d="M1451.30 1583.75A21.9 21.9 0 0 1 1453.18 1584.31L1450.59 1591.77A14.0 14.0 0 0 0 1449.39 1591.42Z" fill="hsl(36,100%,50%)"/><path d="M1452.77 1584.17A21.9 21.9 0 0 1 1454.61 1584.86L1451.50 1592.13A14.0 14.0 0 0 0 1450.33 1591.69Z" fill="hsl(34,100%,50%)"/><path d="M1454.20 1584.69A21.9 21.9 0 0 1 1455.99 1585.51L1452.39 1592.54A14.0 14.0 0 0 0 1451.24 1592.02Z" fill="hsl(32,100%,50%)"/><path d="M1455.60 1585.32A21.9 21.9 0 0 1 1457.33 1586.26L1453.24 1593.02A14.0 14.0 0 0 0 1452.14 1592.42Z" fill="hsl(30,100%,50%)"/><path d="M1456.95 1586.03A21.9 21.9 0 0 1 1458.61 1587.09L1454.06 1593.55A14.0 14.0 0 0 0 1453.00 1592.88Z" fill="hsl(28,100%,50%)"/><path d="M1458.25 1586.84A21.9 21.9 0 0 1 1459.83 1588.02L1454.84 1594.14A14.0 14.0 0 0 0 1453.83 1593.39Z" fill="hsl(26,100%,50%)"/><path d="M1459.48 1587.74A21.9 21.9 0 0 1 1460.98 1589.02L1455.57 1594.79A14.0 14.0 0 0 0 1454.62 1593.97Z" fill="hsl(24,100%,50%)"/><path d="M1460.65 1588.73A21.9 21.9 0 0 1 1462.05 1590.11L1456.26 1595.48A14.0 14.0 0 0 0 1455.37 1594.60Z" fill="hsl(22,100%,50%)"/><path d="M1461.75 1589.79A21.9 21.9 0 0 1 1463.05 1591.26L1456.90 1596.22A14.0 14.0 0 0 0 1456.07 1595.27Z" fill="hsl(20,100%,50%)"/><path d="M1462.78 1590.92A21.9 21.9 0 0 1 1463.97 1592.48L1457.49 1597.00A14.0 14.0 0 0 0 1456.72 1596.00Z" fill="hsl(18,100%,50%)"/><path d="M1463.72 1592.13A21.9 21.9 0 0 1 1464.80 1593.77L1458.02 1597.82A14.0 14.0 0 0 0 1457.33 1596.77Z" fill="hsl(16,100%,50%)"/><path d="M1464.57 1593.39A21.9 21.9 0 0 1 1465.54 1595.11L1458.49 1598.68A14.0 14.0 0 0 0 1457.87 1597.58Z" fill="hsl(15,100%,50%)"/><path d="M1465.34 1594.72A21.9 21.9 0 0 1 1466.18 1596.49L1458.90 1599.56A14.0 14.0 0 0 0 1458.36 1598.43Z" fill="hsl(13,100%,50%)"/><path d="M1466.01 1596.09A21.9 21.9 0 0 1 1466.72 1597.92L1459.25 1600.48A14.0 14.0 0 0 0 1458.79 1599.31Z" fill="hsl(11,100%,50%)"/><path d="M1466.58 1597.51A21.9 21.9 0 0 1 1467.17 1599.39L1459.53 1601.41A14.0 14.0 0 0 0 1459.16 1600.21Z" fill="hsl(9,100%,50%)"/><path d="M1467.05 1598.96A21.9 21.9 0 0 1 1467.51 1600.88L1459.75 1602.36A14.0 14.0 0 0 0 1459.46 1601.14Z" fill="hsl(7,100%,50%)"/><path d="M1467.42 1600.45A21.9 21.9 0 0 1 1467.74 1602.39L1459.90 1603.33A14.0 14.0 0 0 0 1459.69 1602.09Z" fill="hsl(5,100%,50%)"/><path d="M1467.69 1601.95A21.9 21.9 0 0 1 1467.87 1603.91L1459.98 1604.30A14.0 14.0 0 0 0 1459.86 1603.05Z" fill="hsl(3,100%,50%)"/><path d="M1467.85 1603.47A21.9 21.9 0 0 1 1467.90 1605.44L1460.00 1605.28A14.0 14.0 0 0 0 1459.97 1604.02Z" fill="hsl(1,100%,50%)"/></g>
</g>
<!-- bottom icon -->
<g id="bicon">
<clipPath id="cbi"><path d="M740 1920H796V1946H740ZM740 1950H796V1976H740Z"/></clipPath>
<g clip-path="url(#cbi)">
<circle cx="768" cy="1948" r="12.700" fill="none" stroke="#bcbcbc" stroke-width="6.600"/>
<circle cx="768" cy="1948" r="8.300" fill="none" stroke="#fff" stroke-width="2.200"/>
</g>
</g>
</svg>
</body></html>
